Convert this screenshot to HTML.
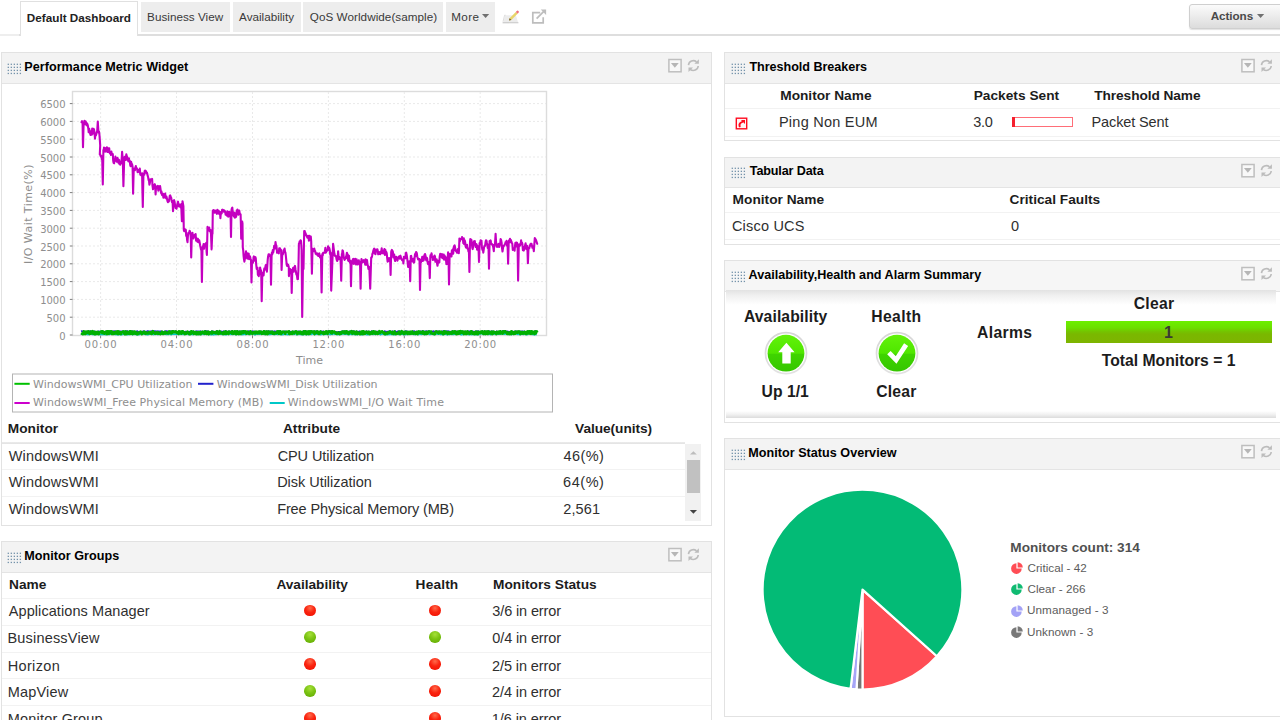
<!DOCTYPE html>
<html>
<head>
<meta charset="utf-8">
<title>Default Dashboard</title>
<style>
html,body{margin:0;padding:0;}
body{width:1280px;height:720px;overflow:hidden;background:#fff;font-family:"Liberation Sans",Arial,sans-serif;color:#222;position:relative;}
.abs{position:absolute;}
.t{position:absolute;white-space:nowrap;line-height:1;}
/* tabs */
#tabline{left:0;top:34px;width:1280px;height:1.5px;background:linear-gradient(90deg,#eeeeee 0,#eeeeee 19px,#dedede 19px);}
.tab{position:absolute;top:2px;height:30px;background:#ededed;}
#tabact{position:absolute;left:19.5px;top:1px;width:118px;height:35px;background:#fff;border:1px solid #e0e0e0;border-bottom:none;box-sizing:border-box;}
#actions{position:absolute;left:1189px;top:3.5px;width:100px;height:25px;box-sizing:border-box;border:1px solid #cfcfcf;border-radius:3px;background:linear-gradient(#fbfbfb,#dcdcdc);box-shadow:0 1px 1px rgba(0,0,0,.12);}
.caret{position:absolute;width:0;height:0;border-left:3.6px solid transparent;border-right:3.6px solid transparent;border-top:4px solid #777;}
/* widgets */
.w{position:absolute;border:1px solid #e2e2e2;background:#fff;box-sizing:border-box;}
.wh{position:absolute;left:0;top:0;right:0;height:29.5px;background:#f3f3f3;border-bottom:1px solid #e4e4e4;}
.grip{position:absolute;left:5.35px;top:9.5px;width:15px;height:12px;overflow:visible;}
.hic{position:absolute;top:4px;width:34px;height:18px;overflow:visible;}
.hl{position:absolute;height:1px;background:#f2f2f2;}
.dot{position:absolute;width:11.6px;height:11.6px;border-radius:50%;}
.dr{background:radial-gradient(circle at 50% 28%,#ff6a4a 0%,#fa2410 45%,#ee0f00 100%);}
.dg{background:radial-gradient(circle at 50% 28%,#a6e03a 0%,#7cc414 45%,#5fa800 100%);}
</style>
</head>
<body>

<!-- shared icon symbols -->
<svg width="0" height="0" style="position:absolute">
  <defs>
    <symbol id="grip" viewBox="0 0 15 12" overflow="visible">
      <g fill="#fff"><!--halo-->
        <path d="M0.9 1.1h14v11h-14z" opacity="0"/>
      </g>
      <g fill="#7392aa">
        <rect x="0.65" y="0.65" width="1.3" height="1.3"/><rect x="3.67" y="0.65" width="1.3" height="1.3"/><rect x="6.69" y="0.65" width="1.3" height="1.3"/><rect x="9.71" y="0.65" width="1.3" height="1.3"/><rect x="12.73" y="0.65" width="1.3" height="1.3"/><rect x="0.65" y="3.70" width="1.3" height="1.3"/><rect x="3.67" y="3.70" width="1.3" height="1.3"/><rect x="6.69" y="3.70" width="1.3" height="1.3"/><rect x="9.71" y="3.70" width="1.3" height="1.3"/><rect x="12.73" y="3.70" width="1.3" height="1.3"/><rect x="0.65" y="6.75" width="1.3" height="1.3"/><rect x="3.67" y="6.75" width="1.3" height="1.3"/><rect x="6.69" y="6.75" width="1.3" height="1.3"/><rect x="9.71" y="6.75" width="1.3" height="1.3"/><rect x="12.73" y="6.75" width="1.3" height="1.3"/><rect x="0.65" y="9.80" width="1.3" height="1.3"/><rect x="3.67" y="9.80" width="1.3" height="1.3"/><rect x="6.69" y="9.80" width="1.3" height="1.3"/><rect x="9.71" y="9.80" width="1.3" height="1.3"/><rect x="12.73" y="9.80" width="1.3" height="1.3"/>
      </g>
    </symbol>
    <symbol id="hicons" viewBox="0 0 34 18" overflow="visible">
      <rect x="1.9" y="2.5" width="12.2" height="12.3" fill="#f8f8f8" stroke="#bebebe" stroke-width="1.5"/>
      <path d="M3.95 6.05h7.8l-3.9 4.75z" fill="#b6b6b6"/>
      <g fill="none" stroke="#bcbcbc" stroke-width="1.6">
        <path d="M21.47 8.12A4.9 4.9 0 0 1 29.5 4.8"/>
        <path d="M31.23 8.98A4.9 4.9 0 0 1 23.2 12.3"/>
      </g>
      <path d="M31.9 2.2v4.5h-4.5z" fill="#bcbcbc"/>
      <path d="M21.5 15v-4.5h4.5z" fill="#bcbcbc"/>
    </symbol>
    <symbol id="pieic" viewBox="0 0 12 12" overflow="visible">
      <path d="M5.4 1.3A5.3 5.3 0 1 0 10.7 6.6H5.4z"/>
      <path d="M6.6 0.2a5.2 5.2 0 0 1 5.2 5.2H6.6z"/>
    </symbol>
  </defs>
</svg>

<!-- TAB BAR -->
<div class="abs" id="tabline"></div>
<div id="tabact"></div>
<div class="tab" style="left:141px;width:89.3px;"></div>
<div class="tab" style="left:232.6px;width:68.4px;"></div>
<div class="tab" style="left:303.4px;width:139.6px;"></div>
<div class="tab" style="left:446px;width:49px;"></div>
<svg class="abs" style="left:482px;top:14px" width="8" height="5" viewBox="0 0 8 5"><path d="M0 0h7.2l-3.6 4.1z" fill="#707070"/></svg>
<!-- edit icon -->
<svg class="abs" style="left:501px;top:9px;overflow:visible" width="19" height="16" viewBox="0 0 19 16">
  <path d="M4.3 6.2h10.6l2.2 7.2h-15z" fill="#ececec"/>
  <path d="M1.6 13.2h15.8v1.1h-15.8z" fill="#c4c4c4"/>
  <path d="M2 12.6l1.6-6.4h1" fill="none" stroke="#d6d6d6" stroke-width=".8"/>
  <path d="M8 11.6l.6-2.4 6.2-6.3 1.8 1.8-6.3 6.2z" fill="#e8d46a"/>
  <path d="M8 11.6l.6-2.4 1.8 1.7z" fill="#6b5a3a"/>
  <path d="M14.8 2.9l.9-.9a1.2 1.2 0 0 1 1.8 1.8l-.9.9z" fill="#f0707c"/>
</svg>
<!-- popout icon -->
<svg class="abs" style="left:530px;top:8px;overflow:visible" width="18" height="17" viewBox="0 0 18 17">
  <path d="M10.2 4.6H2.8v10.2h10.4V9.2" fill="none" stroke="#bdbdbd" stroke-width="1.7"/>
  <path d="M6.6 10.6l8.2-8.2" fill="none" stroke="#bdbdbd" stroke-width="1.8"/>
  <path d="M10.8 1.6h5.3v5.3z" fill="#bdbdbd"/>
</svg>
<div id="actions"></div>
<svg class="abs" style="left:1257px;top:14px" width="8" height="5" viewBox="0 0 8 5"><path d="M0 0h7.2l-3.6 4.1z" fill="#707070"/></svg>
<span class="t" style="left:26.85px;top:12px;font-size:11.7px;letter-spacing:0.013px;font-weight:bold;color:#222;">Default Dashboard</span>
<span class="t" style="left:147.10px;top:11px;font-size:11.7px;letter-spacing:0.021px;color:#3a3a3a;">Business View</span>
<span class="t" style="left:239.10px;top:11px;font-size:11.7px;letter-spacing:-0.009px;color:#3a3a3a;">Availability</span>
<span class="t" style="left:309.80px;top:11px;font-size:11.7px;letter-spacing:0.047px;color:#3a3a3a;">QoS Worldwide(sample)</span>
<span class="t" style="left:451.20px;top:11px;font-size:11.7px;letter-spacing:0.383px;color:#3a3a3a;">More</span>
<span class="t" style="left:1210.75px;top:10px;font-size:11.7px;letter-spacing:-0.075px;font-weight:bold;color:#4a4a4a;">Actions</span>

<!-- WIDGET 1 : Performance Metric Widget -->
<div class="w" id="w1" style="left:1px;top:52px;width:711px;height:474px;">
  <div class="wh"><svg class="grip"><use href="#grip"/></svg><svg class="hic" style="left:665px"><use href="#hicons"/></svg></div>
</div>
<svg class="abs" id="chart" style="left:0;top:0;overflow:visible" width="720" height="430" viewBox="0 0 720 430" font-family="'DejaVu Sans',Verdana,sans-serif" fill="#8e8e8e">
<rect x="72.5" y="91.5" width="474" height="244" fill="#fff" stroke="#dcdcdc" stroke-width="1.4"/>
<path d="M73 317.2H546M73 299.4H546M73 281.6H546M73 263.8H546M73 246.0H546M73 228.2H546M73 210.4H546M73 192.6H546M73 174.8H546M73 157.0H546M73 139.2H546M73 121.4H546M73 103.6H546M100.6 92V335M176.5 92V335M252.5 92V335M328.4 92V335M404.3 92V335M480.2 92V335" stroke="#e9e9e9" stroke-width="1" stroke-dasharray="2 2" fill="none"/>
<path d="M69.8 335.0H72.5M69.8 317.2H72.5M69.8 299.4H72.5M69.8 281.6H72.5M69.8 263.8H72.5M69.8 246.0H72.5M69.8 228.2H72.5M69.8 210.4H72.5M69.8 192.6H72.5M69.8 174.8H72.5M69.8 157.0H72.5M69.8 139.2H72.5M69.8 121.4H72.5M69.8 103.6H72.5M100.6 335.5V338.3M176.5 335.5V338.3M252.5 335.5V338.3M328.4 335.5V338.3M404.3 335.5V338.3M480.2 335.5V338.3" stroke="#7d7d7d" stroke-width="1" fill="none"/>
<g font-size="10" text-anchor="end">
<text x="65.6" y="339.6">0</text>
<text x="65.6" y="321.8">500</text>
<text x="65.6" y="304.0">1000</text>
<text x="65.6" y="286.2">1500</text>
<text x="65.6" y="268.4">2000</text>
<text x="65.6" y="250.6">2500</text>
<text x="65.6" y="232.8">3000</text>
<text x="65.6" y="215.0">3500</text>
<text x="65.6" y="197.2">4000</text>
<text x="65.6" y="179.4">4500</text>
<text x="65.6" y="161.6">5000</text>
<text x="65.6" y="143.8">5500</text>
<text x="65.6" y="126.0">6000</text>
<text x="65.6" y="108.2">6500</text>
</g>
<g font-size="10" text-anchor="middle">
<text x="100.6" y="348.4" textLength="32" lengthAdjust="spacing">00:00</text>
<text x="176.5" y="348.4" textLength="32" lengthAdjust="spacing">04:00</text>
<text x="252.5" y="348.4" textLength="32" lengthAdjust="spacing">08:00</text>
<text x="328.4" y="348.4" textLength="32" lengthAdjust="spacing">12:00</text>
<text x="404.3" y="348.4" textLength="32" lengthAdjust="spacing">16:00</text>
<text x="480.2" y="348.4" textLength="32" lengthAdjust="spacing">20:00</text>
</g>
<text x="309.5" y="364" font-size="11" text-anchor="middle">Time</text>
<text transform="translate(31.8 214.3) rotate(-90)" font-size="11" text-anchor="middle" textLength="99.5" lengthAdjust="spacing">I/O Wait Time(%)</text>
<path d="M81.0 333.9 L81.7 334.2 L82.4 334.1 L83.1 334.3 L83.8 334.3 L84.5 333.8 L85.2 333.7 L85.9 334.5 L86.6 334.0 L87.3 333.9 L88.0 334.7 L88.7 334.2 L89.4 334.5 L90.1 334.2 L90.8 334.3 L91.5 333.9 L92.2 334.3 L92.9 334.6 L93.6 334.2 L94.3 334.4 L95.0 334.4 L95.7 333.8 L96.4 334.5 L97.1 334.3 L97.8 334.0 L98.5 333.7 L99.2 334.6 L99.9 334.2 L100.6 334.4 L101.3 334.6 L102.0 334.4 L102.7 334.6 L103.4 334.1 L104.1 334.5 L104.8 334.1 L105.5 334.6 L106.2 334.6 L106.9 333.8 L107.6 333.8 L108.3 333.9 L109.0 334.7 L109.7 334.1 L110.4 334.3 L111.1 334.0 L111.8 334.2 L112.5 334.1 L113.2 334.1 L113.9 334.3 L114.6 334.3 L115.3 334.6 L116.0 334.4 L116.7 334.6 L117.4 334.6 L118.1 334.7 L118.8 334.4 L119.5 333.9 L120.2 334.6 L120.9 334.7 L121.6 334.6 L122.3 334.3 L123.0 334.4 L123.7 333.9 L124.4 334.5 L125.1 334.3 L125.8 334.0 L126.5 333.8 L127.2 334.6 L127.9 334.7 L128.6 333.8 L129.3 334.5 L130.0 334.1 L130.7 333.9 L131.4 334.0 L132.1 334.5 L132.8 334.6 L133.5 333.7 L134.2 334.3 L134.9 333.7 L135.6 334.4 L136.3 334.0 L137.0 334.6 L137.7 334.7 L138.4 334.2 L139.1 334.7 L139.8 334.0 L140.5 333.8 L141.2 334.3 L141.9 333.7 L142.6 333.9 L143.3 334.1 L144.0 334.3 L144.7 333.9 L145.4 333.7 L146.1 334.6 L146.8 334.0 L147.5 334.7 L148.2 334.6 L148.9 334.1 L149.6 334.2 L150.3 334.2 L151.0 334.3 L151.7 334.3 L152.4 334.3 L153.1 334.3 L153.8 334.6 L154.5 334.2 L155.2 334.1 L155.9 334.4 L156.6 333.9 L157.3 334.0 L158.0 334.7 L158.7 334.2 L159.4 334.2 L160.1 333.7 L160.8 334.1 L161.5 334.3 L162.2 333.7 L162.9 334.3 L163.6 334.3 L164.3 333.8 L165.0 334.3 L165.7 334.2 L166.4 334.4 L167.1 334.1 L167.8 334.4 L168.5 334.4 L169.2 333.7 L169.9 333.8 L170.6 334.4 L171.3 334.7 L172.0 334.0 L172.7 334.2 L173.4 334.3 L174.1 334.0 L174.8 334.1 L175.5 334.0 L176.2 334.1 L176.9 334.3 L177.6 334.0 L178.3 334.1 L179.0 334.5 L179.7 333.7 L180.4 334.3 L181.1 334.4 L181.8 334.0 L182.5 333.9 L183.2 334.5 L183.9 333.9 L184.6 333.9 L185.3 334.1 L186.0 334.4 L186.7 333.8 L187.4 334.0 L188.1 334.0 L188.8 334.5 L189.5 334.1 L190.2 334.6 L190.9 333.9 L191.6 334.0 L192.3 334.4 L193.0 334.6 L193.7 334.2 L194.4 333.9 L195.1 333.8 L195.8 334.2 L196.5 333.9 L197.2 334.5 L197.9 334.5 L198.6 333.9 L199.3 334.0 L200.0 334.5 L200.7 334.3 L201.4 334.5 L202.1 334.0 L202.8 333.8 L203.5 334.0 L204.2 334.5 L204.9 334.0 L205.6 334.0 L206.3 334.1 L207.0 334.1 L207.7 334.1 L208.4 334.6 L209.1 333.9 L209.8 333.7 L210.5 334.6 L211.2 334.6 L211.9 334.7 L212.6 334.1 L213.3 334.7 L214.0 334.6 L214.7 333.9 L215.4 334.4 L216.1 334.5 L216.8 334.4 L217.5 334.2 L218.2 334.0 L218.9 334.0 L219.6 333.9 L220.3 333.8 L221.0 334.3 L221.7 334.0 L222.4 334.5 L223.1 333.7 L223.8 334.6 L224.5 334.4 L225.2 334.6 L225.9 334.6 L226.6 334.6 L227.3 334.3 L228.0 333.7 L228.7 334.4 L229.4 333.9 L230.1 334.0 L230.8 334.4 L231.5 334.2 L232.2 334.1 L232.9 334.6 L233.6 334.3 L234.3 334.0 L235.0 334.0 L235.7 334.6 L236.4 334.2 L237.1 334.5 L237.8 334.1 L238.5 333.9 L239.2 334.2 L239.9 334.5 L240.6 333.9 L241.3 334.5 L242.0 334.6 L242.7 334.5 L243.4 334.5 L244.1 333.7 L244.8 334.3 L245.5 334.6 L246.2 333.7 L246.9 334.0 L247.6 334.0 L248.3 334.2 L249.0 334.1 L249.7 334.2 L250.4 334.5 L251.1 333.7 L251.8 333.8 L252.5 333.8 L253.2 333.8 L253.9 333.8 L254.6 334.7 L255.3 334.6 L256.0 333.8 L256.7 334.2 L257.4 334.0 L258.1 334.0 L258.8 334.1 L259.5 334.3 L260.2 334.3 L260.9 334.1 L261.6 333.9 L262.3 334.0 L263.0 333.8 L263.7 334.3 L264.4 334.4 L265.1 334.1 L265.8 333.8 L266.5 333.9 L267.2 334.1 L267.9 334.3 L268.6 334.5 L269.3 334.1 L270.0 334.5 L270.7 334.3 L271.4 334.1 L272.1 334.1 L272.8 334.2 L273.5 334.4 L274.2 334.1 L274.9 334.4 L275.6 334.2 L276.3 333.9 L277.0 334.2 L277.7 334.4 L278.4 333.8 L279.1 334.1 L279.8 334.1 L280.5 334.6 L281.2 334.6 L281.9 334.1 L282.6 334.6 L283.3 334.5 L284.0 334.0 L284.7 334.2 L285.4 333.8 L286.1 334.5 L286.8 334.4 L287.5 334.6 L288.2 334.5 L288.9 334.4 L289.6 334.4 L290.3 334.3 L291.0 333.8 L291.7 334.3 L292.4 333.7 L293.1 333.8 L293.8 334.5 L294.5 333.7 L295.2 333.8 L295.9 333.8 L296.6 334.6 L297.3 333.9 L298.0 333.7 L298.7 334.5 L299.4 333.8 L300.1 334.5 L300.8 334.4 L301.5 334.5 L302.2 334.7 L302.9 334.3 L303.6 334.5 L304.3 333.7 L305.0 334.5 L305.7 334.2 L306.4 334.4 L307.1 333.8 L307.8 334.4 L308.5 334.6 L309.2 333.8 L309.9 334.0 L310.6 334.3 L311.3 334.5 L312.0 333.9 L312.7 333.9 L313.4 333.9 L314.1 334.3 L314.8 334.5 L315.5 334.1 L316.2 334.1 L316.9 334.1 L317.6 334.1 L318.3 334.1 L319.0 333.8 L319.7 334.2 L320.4 334.7 L321.1 334.1 L321.8 334.4 L322.5 333.9 L323.2 334.4 L323.9 334.5 L324.6 334.4 L325.3 334.2 L326.0 334.2 L326.7 334.3 L327.4 334.6 L328.1 333.8 L328.8 333.8 L329.5 334.4 L330.2 334.6 L330.9 334.2 L331.6 334.1 L332.3 334.4 L333.0 333.9 L333.7 334.0 L334.4 333.9 L335.1 334.3 L335.8 334.0 L336.5 333.9 L337.2 334.4 L337.9 334.7 L338.6 334.0 L339.3 334.4 L340.0 334.1 L340.7 334.6 L341.4 334.3 L342.1 334.0 L342.8 333.9 L343.5 333.7 L344.2 334.2 L344.9 334.1 L345.6 333.9 L346.3 334.1 L347.0 334.0 L347.7 334.5 L348.4 333.8 L349.1 334.7 L349.8 334.2 L350.5 334.3 L351.2 334.2 L351.9 334.5 L352.6 334.5 L353.3 334.3 L354.0 334.2 L354.7 334.4 L355.4 334.6 L356.1 334.1 L356.8 334.4 L357.5 334.7 L358.2 334.2 L358.9 333.9 L359.6 333.9 L360.3 334.4 L361.0 334.4 L361.7 334.7 L362.4 334.6 L363.1 333.9 L363.8 333.9 L364.5 334.0 L365.2 333.9 L365.9 334.4 L366.6 334.6 L367.3 334.6 L368.0 334.0 L368.7 334.6 L369.4 334.0 L370.1 334.1 L370.8 334.4 L371.5 333.8 L372.2 333.8 L372.9 334.5 L373.6 334.0 L374.3 334.1 L375.0 334.3 L375.7 334.4 L376.4 333.7 L377.1 334.0 L377.8 334.1 L378.5 334.2 L379.2 333.9 L379.9 334.3 L380.6 334.7 L381.3 334.1 L382.0 334.2 L382.7 333.8 L383.4 334.0 L384.1 334.4 L384.8 333.8 L385.5 334.6 L386.2 334.6 L386.9 333.8 L387.6 334.6 L388.3 334.1 L389.0 334.5 L389.7 334.5 L390.4 334.0 L391.1 334.4 L391.8 334.4 L392.5 334.5 L393.2 334.0 L393.9 334.5 L394.6 334.7 L395.3 334.4 L396.0 334.2 L396.7 333.8 L397.4 334.2 L398.1 334.1 L398.8 334.4 L399.5 334.4 L400.2 334.3 L400.9 333.9 L401.6 334.3 L402.3 334.3 L403.0 333.9 L403.7 334.6 L404.4 334.4 L405.1 333.8 L405.8 334.6 L406.5 333.8 L407.2 334.0 L407.9 334.4 L408.6 334.3 L409.3 334.3 L410.0 334.3 L410.7 334.2 L411.4 334.0 L412.1 333.9 L412.8 333.8 L413.5 334.4 L414.2 334.5 L414.9 334.2 L415.6 334.4 L416.3 334.1 L417.0 334.0 L417.7 334.1 L418.4 334.6 L419.1 333.7 L419.8 334.2 L420.5 333.9 L421.2 334.5 L421.9 334.1 L422.6 334.0 L423.3 334.1 L424.0 334.2 L424.7 334.5 L425.4 334.1 L426.1 334.5 L426.8 333.8 L427.5 334.0 L428.2 333.8 L428.9 333.8 L429.6 334.5 L430.3 334.4 L431.0 333.9 L431.7 333.9 L432.4 334.1 L433.1 334.4 L433.8 334.5 L434.5 334.4 L435.2 334.3 L435.9 333.8 L436.6 334.1 L437.3 333.9 L438.0 334.2 L438.7 334.3 L439.4 333.9 L440.1 334.0 L440.8 334.5 L441.5 333.7 L442.2 334.5 L442.9 334.6 L443.6 334.6 L444.3 334.1 L445.0 334.3 L445.7 334.3 L446.4 334.3 L447.1 334.7 L447.8 334.4 L448.5 334.0 L449.2 334.6 L449.9 334.2 L450.6 334.3 L451.3 334.4 L452.0 333.7 L452.7 334.5 L453.4 334.4 L454.1 334.2 L454.8 334.2 L455.5 334.2 L456.2 333.9 L456.9 334.2 L457.6 333.7 L458.3 334.2 L459.0 334.3 L459.7 334.1 L460.4 334.3 L461.1 334.7 L461.8 334.6 L462.5 333.8 L463.2 334.5 L463.9 334.3 L464.6 333.8 L465.3 334.1 L466.0 333.9 L466.7 333.8 L467.4 334.2 L468.1 334.6 L468.8 334.0 L469.5 334.6 L470.2 334.4 L470.9 333.8 L471.6 334.6 L472.3 334.3 L473.0 334.6 L473.7 334.4 L474.4 334.4 L475.1 334.0 L475.8 334.5 L476.5 334.6 L477.2 334.6 L477.9 334.1 L478.6 334.5 L479.3 334.2 L480.0 333.8 L480.7 333.7 L481.4 333.8 L482.1 333.9 L482.8 333.9 L483.5 334.2 L484.2 334.4 L484.9 334.2 L485.6 334.1 L486.3 334.3 L487.0 334.0 L487.7 334.2 L488.4 334.5 L489.1 334.1 L489.8 333.9 L490.5 334.6 L491.2 334.4 L491.9 334.1 L492.6 334.1 L493.3 334.2 L494.0 334.3 L494.7 333.9 L495.4 333.7 L496.1 333.9 L496.8 334.5 L497.5 333.8 L498.2 334.2 L498.9 333.9 L499.6 333.9 L500.3 333.9 L501.0 334.1 L501.7 333.9 L502.4 333.7 L503.1 333.8 L503.8 333.9 L504.5 334.2 L505.2 333.8 L505.9 333.7 L506.6 334.1 L507.3 334.1 L508.0 334.4 L508.7 333.8 L509.4 334.1 L510.1 334.1 L510.8 333.7 L511.5 334.7 L512.2 333.9 L512.9 333.8 L513.6 334.2 L514.3 333.9 L515.0 334.3 L515.7 334.0 L516.4 333.8 L517.1 333.8 L517.8 334.4 L518.5 334.0 L519.2 334.5 L519.9 334.2 L520.6 334.6 L521.3 334.0 L522.0 333.9 L522.7 334.0 L523.4 334.5 L524.1 334.3 L524.8 334.0 L525.5 333.8 L526.2 334.4 L526.9 334.7 L527.6 334.3 L528.3 333.7 L529.0 333.7 L529.7 333.8 L530.4 333.9 L531.1 333.7 L531.8 333.8 L532.5 334.4 L533.2 334.6 L533.9 333.9 L534.6 334.7 L535.3 334.2 L536.0 334.5 L536.7 334.6" stroke="#00c8c8" stroke-width="1.6" fill="none" stroke-linejoin="round"/>
<path d="M81.0 331.3 L81.7 331.1 L82.4 331.5 L83.1 331.2 L83.8 331.1 L84.5 331.5 L85.2 332.1 L85.9 332.0 L86.6 331.9 L87.3 331.3 L88.0 331.6 L88.7 331.3 L89.4 331.2 L90.1 331.1 L90.8 331.3 L91.5 332.1 L92.2 332.0 L92.9 332.0 L93.6 332.0 L94.3 331.2 L95.0 331.4 L95.7 331.8 L96.4 331.9 L97.1 332.0 L97.8 332.1 L98.5 331.1 L99.2 331.7 L99.9 331.8 L100.6 331.6 L101.3 331.2 L102.0 331.6 L102.7 331.1 L103.4 332.1 L104.1 332.0 L104.8 331.7 L105.5 331.4 L106.2 332.1 L106.9 331.7 L107.6 332.1 L108.3 332.0 L109.0 331.6 L109.7 331.5 L110.4 331.7 L111.1 331.5 L111.8 331.2 L112.5 331.4 L113.2 332.0 L113.9 331.1 L114.6 331.1 L115.3 331.8 L116.0 331.3 L116.7 331.6 L117.4 331.6 L118.1 331.4 L118.8 332.2 L119.5 331.2 L120.2 331.5 L120.9 331.2 L121.6 331.8 L122.3 331.3 L123.0 331.4 L123.7 331.9 L124.4 331.4 L125.1 331.7 L125.8 332.1 L126.5 331.1 L127.2 331.1 L127.9 331.3 L128.6 331.9 L129.3 331.7 L130.0 331.3 L130.7 331.4 L131.4 331.2 L132.1 331.6 L132.8 331.1 L133.5 331.8 L134.2 332.1 L134.9 332.1 L135.6 331.9 L136.3 332.2 L137.0 331.0 L137.7 331.3 L138.4 332.2 L139.1 331.9 L139.8 331.5 L140.5 332.1 L141.2 331.7 L141.9 332.0 L142.6 331.4 L143.3 331.2 L144.0 331.5 L144.7 331.2 L145.4 331.5 L146.1 332.2 L146.8 331.4 L147.5 331.0 L148.2 331.1 L148.9 331.2 L149.6 331.9 L150.3 331.4 L151.0 331.3 L151.7 331.1 L152.4 332.2 L153.1 331.5 L153.8 331.2 L154.5 331.1 L155.2 331.1 L155.9 331.2 L156.6 331.8 L157.3 331.2 L158.0 331.0 L158.7 331.6 L159.4 331.3 L160.1 332.2 L160.8 331.1 L161.5 331.6 L162.2 331.9 L162.9 331.5 L163.6 332.2 L164.3 331.6 L165.0 331.3 L165.7 331.5 L166.4 331.0 L167.1 331.5 L167.8 331.3 L168.5 332.1 L169.2 332.0 L169.9 331.6 L170.6 331.0 L171.3 331.3 L172.0 331.3 L172.7 331.2 L173.4 331.3 L174.1 332.0 L174.8 331.2 L175.5 331.1 L176.2 332.1 L176.9 331.7 L177.6 332.2 L178.3 331.5 L179.0 332.1 L179.7 331.8 L180.4 331.9 L181.1 331.9 L181.8 331.6 L182.5 331.1 L183.2 331.3 L183.9 332.0 L184.6 332.1 L185.3 332.1 L186.0 331.4 L186.7 331.8 L187.4 332.0 L188.1 331.8 L188.8 332.0 L189.5 331.6 L190.2 331.8 L190.9 331.8 L191.6 331.3 L192.3 332.1 L193.0 332.1 L193.7 331.1 L194.4 332.2 L195.1 332.2 L195.8 331.8 L196.5 331.1 L197.2 332.1 L197.9 331.2 L198.6 332.2 L199.3 331.8 L200.0 331.1 L200.7 331.2 L201.4 331.8 L202.1 331.7 L202.8 331.9 L203.5 332.1 L204.2 331.3 L204.9 331.0 L205.6 332.1 L206.3 331.0 L207.0 332.1 L207.7 331.1 L208.4 332.0 L209.1 331.9 L209.8 332.1 L210.5 331.7 L211.2 332.1 L211.9 331.2 L212.6 331.8 L213.3 331.4 L214.0 332.1 L214.7 331.9 L215.4 331.6 L216.1 331.6 L216.8 331.0 L217.5 331.0 L218.2 331.7 L218.9 331.6 L219.6 332.0 L220.3 331.7 L221.0 331.2 L221.7 331.4 L222.4 331.9 L223.1 331.6 L223.8 331.0 L224.5 332.0 L225.2 332.0 L225.9 331.1 L226.6 331.7 L227.3 331.5 L228.0 331.9 L228.7 331.4 L229.4 331.3 L230.1 331.6 L230.8 332.2 L231.5 331.1 L232.2 331.1 L232.9 331.7 L233.6 332.1 L234.3 331.6 L235.0 331.5 L235.7 332.0 L236.4 331.9 L237.1 331.1 L237.8 332.1 L238.5 331.2 L239.2 331.4 L239.9 332.0 L240.6 331.5 L241.3 332.0 L242.0 331.2 L242.7 332.0 L243.4 331.2 L244.1 331.2 L244.8 331.6 L245.5 331.4 L246.2 331.7 L246.9 332.1 L247.6 331.9 L248.3 331.0 L249.0 331.4 L249.7 331.7 L250.4 331.6 L251.1 331.9 L251.8 331.6 L252.5 331.1 L253.2 331.3 L253.9 332.0 L254.6 331.4 L255.3 331.9 L256.0 332.2 L256.7 331.8 L257.4 331.8 L258.1 331.7 L258.8 331.4 L259.5 332.1 L260.2 331.6 L260.9 332.1 L261.6 331.4 L262.3 332.0 L263.0 331.9 L263.7 331.7 L264.4 331.5 L265.1 331.2 L265.8 331.9 L266.5 331.4 L267.2 331.8 L267.9 331.2 L268.6 331.1 L269.3 331.2 L270.0 332.0 L270.7 331.2 L271.4 332.1 L272.1 331.4 L272.8 331.7 L273.5 331.4 L274.2 331.7 L274.9 331.1 L275.6 331.5 L276.3 332.1 L277.0 331.2 L277.7 331.8 L278.4 331.4 L279.1 331.4 L279.8 331.0 L280.5 331.0 L281.2 332.1 L281.9 332.0 L282.6 332.0 L283.3 332.0 L284.0 332.1 L284.7 331.2 L285.4 331.7 L286.1 331.6 L286.8 331.7 L287.5 332.1 L288.2 331.9 L288.9 332.2 L289.6 331.1 L290.3 331.8 L291.0 331.8 L291.7 331.9 L292.4 331.7 L293.1 332.0 L293.8 331.4 L294.5 332.1 L295.2 331.5 L295.9 331.7 L296.6 332.1 L297.3 331.8 L298.0 331.4 L298.7 331.3 L299.4 331.4 L300.1 331.8 L300.8 332.2 L301.5 332.1 L302.2 331.5 L302.9 331.5 L303.6 332.0 L304.3 331.3 L305.0 331.5 L305.7 331.0 L306.4 331.2 L307.1 331.6 L307.8 331.8 L308.5 331.7 L309.2 331.4 L309.9 332.1 L310.6 331.7 L311.3 331.2 L312.0 331.1 L312.7 332.2 L313.4 332.2 L314.1 332.1 L314.8 331.7 L315.5 331.4 L316.2 331.1 L316.9 331.3 L317.6 331.3 L318.3 332.1 L319.0 332.1 L319.7 331.9 L320.4 331.2 L321.1 331.3 L321.8 331.4 L322.5 332.1 L323.2 331.2 L323.9 331.9 L324.6 331.8 L325.3 331.7 L326.0 332.2 L326.7 331.3 L327.4 331.6 L328.1 331.2 L328.8 331.1 L329.5 331.0 L330.2 331.4 L330.9 331.1 L331.6 331.1 L332.3 332.2 L333.0 331.3 L333.7 332.1 L334.4 331.8 L335.1 331.9 L335.8 331.8 L336.5 332.1 L337.2 332.1 L337.9 331.9 L338.6 331.7 L339.3 331.8 L340.0 331.9 L340.7 331.7 L341.4 331.6 L342.1 331.2 L342.8 332.0 L343.5 331.6 L344.2 331.1 L344.9 331.2 L345.6 332.0 L346.3 331.3 L347.0 331.5 L347.7 331.8 L348.4 332.0 L349.1 331.4 L349.8 331.5 L350.5 331.5 L351.2 331.0 L351.9 332.1 L352.6 331.0 L353.3 332.2 L354.0 331.2 L354.7 331.2 L355.4 332.0 L356.1 332.0 L356.8 331.3 L357.5 331.7 L358.2 331.6 L358.9 331.9 L359.6 331.2 L360.3 332.0 L361.0 332.2 L361.7 331.8 L362.4 332.1 L363.1 332.1 L363.8 331.5 L364.5 332.0 L365.2 332.0 L365.9 331.7 L366.6 331.1 L367.3 331.7 L368.0 332.1 L368.7 331.4 L369.4 331.8 L370.1 332.1 L370.8 331.7 L371.5 331.0 L372.2 331.8 L372.9 331.3 L373.6 332.0 L374.3 331.8 L375.0 331.4 L375.7 332.1 L376.4 331.8 L377.1 331.4 L377.8 332.0 L378.5 332.1 L379.2 332.1 L379.9 332.1 L380.6 331.8 L381.3 331.8 L382.0 331.7 L382.7 331.6 L383.4 332.2 L384.1 331.4 L384.8 331.1 L385.5 331.9 L386.2 331.6 L386.9 331.7 L387.6 331.7 L388.3 331.3 L389.0 331.2 L389.7 331.1 L390.4 331.9 L391.1 332.1 L391.8 331.8 L392.5 331.1 L393.2 332.2 L393.9 332.0 L394.6 331.6 L395.3 331.0 L396.0 332.0 L396.7 331.7 L397.4 331.7 L398.1 331.0 L398.8 331.9 L399.5 331.0 L400.2 331.6 L400.9 331.2 L401.6 331.4 L402.3 332.1 L403.0 331.9 L403.7 332.0 L404.4 331.4 L405.1 331.5 L405.8 331.7 L406.5 331.0 L407.2 331.5 L407.9 332.2 L408.6 331.9 L409.3 332.0 L410.0 331.4 L410.7 331.8 L411.4 331.9 L412.1 331.8 L412.8 331.5 L413.5 331.2 L414.2 331.0 L414.9 332.1 L415.6 332.1 L416.3 331.3 L417.0 331.9 L417.7 331.5 L418.4 331.8 L419.1 332.0 L419.8 331.4 L420.5 331.7 L421.2 331.3 L421.9 331.6 L422.6 331.0 L423.3 331.3 L424.0 331.3 L424.7 332.1 L425.4 331.2 L426.1 331.9 L426.8 331.1 L427.5 332.2 L428.2 331.2 L428.9 331.1 L429.6 331.3 L430.3 332.1 L431.0 331.8 L431.7 332.1 L432.4 331.6 L433.1 331.1 L433.8 331.4 L434.5 331.5 L435.2 332.2 L435.9 331.2 L436.6 331.3 L437.3 332.0 L438.0 331.1 L438.7 332.2 L439.4 331.4 L440.1 331.7 L440.8 331.8 L441.5 332.1 L442.2 331.1 L442.9 332.0 L443.6 331.2 L444.3 331.9 L445.0 331.0 L445.7 331.9 L446.4 331.2 L447.1 331.2 L447.8 331.0 L448.5 331.4 L449.2 331.4 L449.9 332.2 L450.6 331.7 L451.3 331.4 L452.0 332.2 L452.7 331.2 L453.4 331.3 L454.1 332.1 L454.8 332.1 L455.5 331.8 L456.2 332.2 L456.9 331.1 L457.6 332.1 L458.3 331.8 L459.0 331.8 L459.7 332.0 L460.4 331.1 L461.1 331.2 L461.8 331.2 L462.5 331.6 L463.2 331.7 L463.9 331.6 L464.6 331.4 L465.3 331.9 L466.0 332.0 L466.7 331.9 L467.4 331.0 L468.1 331.2 L468.8 331.3 L469.5 331.3 L470.2 331.7 L470.9 331.2 L471.6 331.7 L472.3 331.4 L473.0 331.4 L473.7 331.8 L474.4 332.1 L475.1 331.2 L475.8 331.4 L476.5 332.2 L477.2 331.3 L477.9 331.0 L478.6 331.2 L479.3 332.0 L480.0 331.9 L480.7 332.1 L481.4 331.6 L482.1 331.0 L482.8 331.4 L483.5 331.9 L484.2 331.5 L484.9 331.2 L485.6 331.5 L486.3 331.6 L487.0 331.4 L487.7 331.5 L488.4 331.2 L489.1 331.0 L489.8 331.9 L490.5 331.9 L491.2 331.5 L491.9 331.1 L492.6 331.4 L493.3 331.7 L494.0 332.1 L494.7 331.6 L495.4 332.2 L496.1 331.6 L496.8 331.2 L497.5 331.7 L498.2 331.7 L498.9 331.7 L499.6 331.9 L500.3 331.0 L501.0 331.5 L501.7 332.0 L502.4 331.2 L503.1 331.1 L503.8 331.2 L504.5 331.3 L505.2 331.5 L505.9 331.4 L506.6 331.8 L507.3 331.2 L508.0 331.4 L508.7 331.8 L509.4 331.7 L510.1 332.2 L510.8 332.1 L511.5 331.3 L512.2 331.4 L512.9 331.6 L513.6 331.7 L514.3 331.4 L515.0 332.0 L515.7 331.2 L516.4 331.6 L517.1 331.1 L517.8 332.1 L518.5 331.7 L519.2 332.2 L519.9 331.2 L520.6 331.9 L521.3 331.7 L522.0 331.1 L522.7 332.0 L523.4 332.0 L524.1 331.1 L524.8 332.1 L525.5 331.9 L526.2 331.7 L526.9 331.7 L527.6 331.3 L528.3 331.1 L529.0 331.6 L529.7 332.0 L530.4 331.3 L531.1 331.6 L531.8 331.3 L532.5 331.8 L533.2 332.2 L533.9 332.1 L534.6 331.3 L535.3 331.5 L536.0 331.0 L536.7 331.6" stroke="#2a2ad0" stroke-width="1.6" fill="none" stroke-linejoin="round"/>
<path d="M81.0 333.1 L81.5 333.4 L81.9 333.6 L82.4 334.0 L82.8 333.4 L83.3 334.0 L83.7 331.3 L84.2 332.6 L84.6 334.0 L85.1 333.1 L85.5 333.9 L86.0 331.5 L86.4 332.6 L86.9 331.9 L87.3 332.8 L87.8 332.9 L88.2 331.2 L88.7 331.9 L89.1 332.0 L89.6 333.9 L90.0 333.5 L90.5 331.7 L90.9 333.6 L91.4 331.6 L91.8 333.1 L92.3 331.6 L92.7 331.2 L93.2 333.8 L93.6 331.8 L94.1 331.8 L94.5 334.1 L95.0 333.8 L95.4 332.1 L95.9 334.1 L96.3 332.8 L96.8 333.2 L97.2 331.8 L97.7 334.0 L98.1 333.3 L98.6 334.1 L99.0 333.9 L99.5 332.1 L99.9 332.3 L100.4 331.7 L100.8 331.6 L101.3 331.4 L101.7 332.1 L102.2 333.0 L102.6 331.2 L103.1 333.2 L103.5 332.2 L104.0 332.1 L104.4 333.7 L104.9 332.6 L105.3 332.1 L105.8 332.6 L106.2 333.3 L106.7 331.4 L107.1 334.1 L107.6 331.3 L108.0 333.4 L108.5 333.7 L108.9 331.3 L109.4 333.6 L109.8 332.3 L110.3 332.9 L110.7 331.2 L111.2 331.3 L111.6 331.7 L112.1 334.1 L112.5 331.8 L113.0 333.5 L113.4 334.0 L113.9 334.0 L114.3 332.2 L114.8 332.3 L115.2 332.8 L115.7 333.5 L116.1 331.5 L116.6 333.4 L117.0 333.6 L117.5 333.8 L117.9 331.3 L118.4 334.0 L118.8 331.5 L119.3 332.2 L119.7 333.0 L120.2 334.0 L120.6 332.2 L121.1 334.0 L121.5 332.8 L122.0 332.1 L122.4 332.2 L122.9 331.7 L123.3 331.4 L123.8 331.6 L124.2 333.3 L124.7 334.2 L125.1 331.7 L125.6 331.3 L126.0 334.2 L126.5 332.8 L126.9 332.4 L127.4 331.9 L127.8 333.0 L128.3 333.7 L128.7 332.6 L129.2 332.5 L129.6 331.4 L130.1 333.9 L130.5 331.3 L131.0 332.7 L131.4 333.7 L131.9 331.6 L132.3 333.4 L132.8 334.0 L133.2 333.1 L133.7 333.6 L134.1 331.5 L134.6 332.5 L135.0 331.6 L135.5 333.7 L135.9 332.1 L136.4 332.6 L136.8 334.2 L137.3 333.8 L137.7 334.1 L138.2 332.6 L138.6 332.7 L139.1 333.4 L139.5 332.6 L139.9 332.1 L140.4 332.4 L140.8 331.6 L141.3 332.3 L141.7 334.2 L142.2 334.1 L142.6 333.1 L143.1 332.7 L143.5 332.2 L144.0 331.5 L144.4 332.0 L144.9 333.5 L145.3 333.8 L145.8 332.3 L146.2 333.6 L146.7 333.5 L147.1 333.3 L147.6 333.2 L148.0 333.5 L148.5 332.3 L148.9 333.3 L149.4 332.0 L149.8 332.7 L150.3 333.5 L150.7 333.3 L151.2 332.1 L151.6 334.0 L152.1 333.1 L152.5 332.9 L153.0 331.2 L153.4 332.8 L153.9 332.0 L154.3 333.2 L154.8 332.6 L155.2 333.7 L155.7 333.1 L156.1 333.6 L156.6 332.2 L157.0 333.1 L157.5 333.4 L157.9 333.7 L158.4 332.3 L158.8 333.7 L159.3 333.8 L159.7 333.3 L160.2 334.1 L160.6 334.1 L161.1 332.8 L161.5 332.8 L162.0 331.7 L162.4 333.7 L162.9 334.0 L163.3 332.6 L163.8 333.3 L164.2 333.4 L164.7 333.4 L165.1 331.7 L165.6 333.5 L166.0 332.9 L166.5 333.2 L166.9 332.5 L167.4 333.1 L167.8 333.5 L168.3 333.1 L168.7 333.4 L169.2 331.3 L169.6 331.7 L170.1 332.5 L170.5 333.2 L171.0 331.9 L171.4 333.3 L171.9 333.1 L172.3 331.3 L172.8 332.6 L173.2 331.9 L173.7 331.4 L174.1 331.6 L174.6 332.2 L175.0 331.7 L175.5 331.8 L175.9 331.3 L176.4 332.6 L176.8 332.3 L177.3 333.0 L177.7 333.0 L178.2 331.9 L178.6 333.9 L179.1 331.2 L179.5 332.4 L180.0 332.0 L180.4 332.4 L180.9 331.5 L181.3 333.7 L181.8 332.3 L182.2 331.3 L182.7 333.0 L183.1 331.5 L183.6 332.8 L184.0 332.2 L184.5 332.9 L184.9 334.1 L185.4 333.7 L185.8 332.5 L186.3 333.6 L186.7 333.1 L187.2 332.3 L187.6 331.6 L188.1 333.0 L188.5 332.9 L189.0 334.1 L189.4 334.1 L189.9 333.0 L190.3 332.3 L190.8 333.9 L191.2 331.2 L191.7 331.5 L192.1 332.9 L192.6 333.0 L193.0 331.6 L193.5 333.1 L193.9 333.9 L194.4 332.3 L194.8 332.5 L195.3 331.9 L195.7 332.1 L196.2 334.1 L196.6 332.3 L197.1 334.1 L197.5 333.9 L198.0 333.0 L198.4 332.0 L198.9 334.1 L199.3 332.7 L199.8 332.4 L200.2 332.2 L200.7 334.2 L201.1 332.7 L201.6 332.1 L202.0 332.6 L202.5 331.6 L202.9 333.1 L203.4 332.5 L203.8 332.1 L204.3 333.5 L204.7 333.7 L205.2 331.2 L205.6 332.8 L206.1 332.0 L206.5 334.0 L207.0 333.5 L207.4 331.9 L207.9 332.0 L208.3 331.7 L208.8 334.2 L209.2 332.1 L209.7 333.0 L210.1 332.6 L210.6 333.1 L211.0 333.0 L211.5 333.4 L211.9 331.6 L212.4 333.5 L212.8 332.1 L213.3 332.8 L213.7 332.2 L214.2 332.1 L214.6 332.8 L215.1 332.6 L215.5 332.3 L216.0 333.4 L216.4 333.0 L216.9 331.3 L217.3 332.0 L217.8 332.6 L218.2 333.9 L218.7 333.9 L219.1 332.8 L219.6 331.2 L220.0 333.5 L220.5 332.5 L220.9 332.9 L221.4 333.3 L221.8 333.1 L222.3 332.6 L222.7 333.9 L223.2 332.4 L223.6 332.4 L224.1 333.8 L224.5 331.8 L225.0 332.1 L225.4 333.7 L225.9 331.4 L226.3 333.7 L226.8 333.3 L227.2 332.5 L227.7 332.1 L228.1 333.5 L228.6 333.9 L229.0 331.6 L229.5 332.6 L229.9 332.8 L230.4 332.7 L230.8 332.2 L231.3 331.7 L231.7 333.0 L232.2 333.6 L232.6 331.4 L233.1 331.9 L233.5 333.7 L234.0 333.6 L234.4 333.2 L234.9 331.3 L235.3 333.4 L235.8 334.1 L236.2 334.2 L236.7 333.3 L237.1 331.3 L237.6 333.7 L238.0 331.9 L238.5 333.1 L238.9 334.1 L239.4 333.3 L239.8 331.6 L240.3 332.1 L240.7 334.0 L241.2 331.6 L241.6 333.0 L242.1 332.4 L242.5 331.7 L243.0 333.1 L243.4 331.3 L243.9 331.5 L244.3 332.3 L244.8 331.4 L245.2 331.4 L245.7 332.9 L246.1 333.4 L246.6 333.8 L247.0 331.6 L247.5 332.5 L247.9 332.1 L248.4 333.0 L248.8 332.7 L249.3 334.0 L249.7 332.3 L250.2 331.4 L250.6 333.3 L251.1 331.7 L251.5 333.1 L252.0 332.7 L252.4 333.9 L252.9 332.9 L253.3 333.1 L253.8 332.0 L254.2 332.9 L254.7 332.0 L255.1 333.5 L255.6 332.8 L256.0 331.6 L256.5 331.9 L256.9 332.3 L257.4 333.4 L257.8 331.7 L258.3 333.3 L258.7 333.2 L259.2 331.5 L259.6 333.2 L260.1 331.5 L260.5 331.6 L261.0 333.0 L261.4 331.9 L261.9 333.8 L262.3 332.6 L262.8 332.2 L263.2 333.6 L263.7 331.3 L264.1 333.4 L264.6 331.4 L265.0 331.7 L265.5 334.1 L265.9 333.2 L266.4 331.9 L266.8 331.5 L267.3 334.1 L267.7 333.2 L268.2 333.7 L268.6 331.6 L269.1 333.1 L269.5 332.3 L270.0 331.9 L270.4 332.2 L270.9 333.0 L271.3 332.2 L271.8 332.4 L272.2 331.6 L272.7 333.7 L273.1 333.1 L273.6 333.6 L274.0 332.5 L274.5 333.8 L274.9 332.8 L275.4 333.0 L275.8 332.9 L276.3 333.4 L276.7 332.4 L277.2 331.5 L277.6 331.3 L278.1 331.8 L278.5 331.3 L279.0 333.9 L279.4 332.6 L279.9 333.5 L280.3 331.2 L280.8 332.6 L281.2 333.9 L281.7 333.1 L282.1 332.5 L282.6 332.6 L283.0 331.5 L283.5 331.7 L283.9 331.7 L284.4 332.3 L284.8 332.4 L285.3 333.8 L285.7 331.7 L286.2 332.0 L286.6 332.0 L287.1 331.7 L287.5 332.1 L288.0 331.9 L288.4 332.6 L288.9 331.3 L289.3 334.0 L289.8 332.3 L290.2 334.0 L290.7 333.3 L291.1 333.2 L291.6 332.6 L292.0 334.0 L292.5 331.6 L292.9 333.2 L293.4 332.1 L293.8 333.2 L294.3 333.4 L294.7 331.7 L295.2 331.8 L295.6 331.3 L296.1 331.9 L296.5 331.4 L297.0 332.4 L297.4 334.1 L297.9 332.3 L298.3 332.1 L298.8 332.6 L299.2 332.0 L299.7 333.4 L300.1 333.4 L300.6 331.7 L301.0 331.9 L301.5 333.2 L301.9 334.0 L302.4 333.1 L302.8 332.5 L303.3 334.1 L303.7 331.2 L304.2 331.4 L304.6 333.5 L305.1 332.4 L305.5 331.3 L306.0 332.8 L306.4 334.2 L306.9 332.8 L307.3 332.3 L307.8 331.5 L308.2 331.4 L308.7 333.9 L309.1 332.7 L309.6 334.0 L310.0 331.4 L310.5 331.9 L310.9 331.4 L311.4 332.4 L311.8 331.4 L312.3 332.0 L312.7 332.4 L313.2 332.1 L313.6 331.4 L314.1 331.3 L314.5 334.1 L315.0 331.7 L315.4 332.7 L315.9 332.4 L316.3 332.8 L316.8 331.5 L317.2 332.1 L317.7 331.5 L318.1 332.8 L318.6 334.0 L319.0 333.0 L319.5 333.8 L319.9 331.8 L320.4 331.3 L320.8 332.8 L321.3 332.7 L321.7 332.9 L322.2 332.3 L322.6 333.1 L323.1 333.4 L323.5 333.9 L324.0 332.1 L324.4 332.5 L324.9 333.7 L325.3 331.9 L325.8 331.5 L326.2 332.1 L326.7 331.5 L327.1 333.5 L327.6 333.7 L328.0 332.1 L328.5 331.6 L328.9 331.4 L329.4 331.9 L329.8 331.5 L330.3 332.5 L330.7 332.9 L331.2 331.9 L331.6 331.4 L332.1 333.3 L332.5 331.3 L333.0 331.8 L333.4 332.1 L333.9 332.3 L334.3 331.5 L334.8 332.5 L335.2 332.1 L335.7 333.5 L336.1 332.9 L336.6 333.9 L337.0 333.2 L337.5 333.5 L337.9 332.9 L338.4 332.5 L338.8 333.7 L339.3 333.2 L339.7 334.1 L340.2 333.4 L340.6 333.3 L341.1 332.0 L341.5 333.6 L342.0 332.3 L342.4 331.6 L342.9 331.4 L343.3 331.7 L343.8 332.0 L344.2 333.2 L344.7 332.1 L345.1 331.4 L345.6 333.5 L346.0 332.9 L346.5 331.3 L346.9 331.4 L347.4 331.6 L347.8 332.3 L348.3 333.8 L348.7 334.0 L349.2 333.0 L349.6 331.9 L350.1 332.5 L350.5 332.3 L351.0 332.2 L351.4 331.2 L351.9 333.0 L352.3 333.7 L352.8 333.4 L353.2 331.5 L353.7 332.8 L354.1 331.7 L354.6 333.3 L355.0 332.5 L355.5 334.0 L355.9 333.6 L356.4 331.6 L356.8 332.2 L357.3 333.9 L357.7 332.6 L358.2 332.5 L358.6 332.5 L359.1 333.5 L359.5 334.0 L360.0 332.8 L360.4 334.1 L360.9 333.0 L361.3 331.5 L361.8 333.6 L362.2 332.5 L362.7 331.4 L363.1 334.1 L363.6 331.3 L364.0 332.9 L364.5 332.6 L364.9 333.8 L365.4 332.4 L365.8 331.8 L366.3 332.0 L366.7 331.8 L367.2 332.9 L367.6 332.3 L368.1 333.5 L368.5 331.9 L369.0 332.3 L369.4 331.9 L369.9 334.1 L370.3 333.7 L370.8 333.7 L371.2 333.1 L371.7 332.4 L372.1 331.6 L372.6 333.7 L373.0 332.7 L373.5 331.3 L373.9 331.7 L374.4 331.5 L374.8 333.4 L375.3 333.9 L375.7 331.8 L376.2 333.6 L376.6 332.2 L377.1 333.2 L377.5 333.8 L378.0 333.1 L378.4 333.6 L378.9 332.3 L379.3 331.2 L379.8 332.7 L380.2 333.0 L380.7 331.8 L381.1 332.4 L381.6 332.2 L382.0 331.3 L382.5 332.1 L382.9 332.3 L383.4 332.6 L383.8 333.3 L384.3 332.4 L384.7 334.1 L385.2 333.6 L385.6 334.0 L386.1 333.3 L386.5 333.2 L387.0 332.8 L387.4 333.6 L387.9 332.3 L388.3 333.0 L388.8 333.2 L389.2 332.8 L389.7 332.1 L390.1 331.4 L390.6 331.5 L391.0 332.3 L391.5 332.9 L391.9 333.5 L392.4 333.3 L392.8 332.1 L393.3 334.0 L393.7 332.0 L394.2 333.3 L394.6 331.4 L395.1 333.5 L395.5 333.2 L396.0 334.1 L396.4 333.9 L396.9 333.3 L397.3 333.7 L397.8 333.4 L398.2 333.0 L398.7 331.8 L399.1 332.8 L399.6 333.9 L400.0 331.9 L400.5 334.1 L400.9 332.8 L401.4 332.4 L401.8 331.2 L402.3 332.4 L402.7 331.7 L403.2 333.2 L403.6 333.9 L404.1 333.9 L404.5 333.0 L405.0 332.4 L405.4 331.5 L405.9 333.3 L406.3 332.9 L406.8 333.3 L407.2 332.3 L407.7 333.9 L408.1 331.8 L408.6 332.1 L409.0 332.0 L409.5 333.1 L409.9 333.9 L410.4 331.7 L410.8 333.1 L411.3 333.5 L411.7 331.9 L412.2 331.4 L412.6 332.9 L413.1 333.7 L413.5 333.8 L414.0 333.4 L414.4 332.5 L414.9 332.5 L415.3 332.8 L415.8 333.9 L416.2 332.1 L416.7 332.0 L417.1 333.0 L417.6 334.1 L418.0 331.8 L418.5 331.3 L418.9 331.5 L419.4 332.9 L419.8 333.0 L420.3 331.8 L420.7 331.8 L421.2 333.0 L421.6 333.1 L422.1 333.3 L422.5 333.4 L423.0 331.4 L423.4 332.7 L423.9 333.7 L424.3 334.1 L424.8 332.2 L425.2 333.8 L425.7 333.1 L426.1 334.0 L426.6 331.9 L427.0 333.3 L427.5 333.7 L427.9 332.6 L428.4 331.5 L428.8 331.8 L429.3 331.7 L429.7 331.5 L430.2 331.7 L430.6 333.0 L431.1 331.5 L431.5 333.5 L432.0 333.4 L432.4 333.6 L432.9 333.6 L433.3 333.3 L433.8 334.0 L434.2 334.1 L434.7 333.1 L435.1 334.1 L435.6 331.5 L436.0 331.5 L436.5 331.4 L436.9 331.8 L437.4 332.3 L437.8 332.6 L438.3 333.2 L438.7 333.4 L439.2 331.5 L439.6 332.4 L440.1 332.8 L440.5 332.3 L441.0 331.6 L441.4 333.0 L441.9 332.3 L442.3 333.3 L442.8 332.7 L443.2 334.1 L443.7 334.0 L444.1 331.4 L444.6 333.5 L445.0 333.4 L445.5 332.1 L445.9 331.6 L446.4 332.6 L446.8 332.3 L447.3 333.4 L447.7 334.0 L448.2 332.3 L448.6 332.1 L449.1 332.7 L449.5 333.3 L450.0 333.6 L450.4 332.9 L450.9 332.1 L451.3 332.2 L451.8 333.7 L452.2 332.8 L452.7 331.4 L453.1 332.5 L453.6 331.9 L454.0 333.2 L454.5 331.4 L454.9 332.0 L455.4 331.5 L455.8 332.6 L456.3 334.2 L456.7 332.8 L457.2 332.4 L457.6 334.0 L458.1 331.5 L458.5 332.3 L459.0 333.6 L459.4 331.2 L459.9 333.5 L460.3 332.3 L460.8 331.2 L461.2 332.0 L461.7 332.6 L462.1 332.3 L462.6 332.8 L463.0 331.4 L463.5 331.9 L463.9 334.1 L464.4 332.5 L464.8 332.6 L465.3 331.5 L465.7 332.0 L466.2 334.1 L466.6 333.3 L467.1 332.7 L467.5 331.4 L468.0 332.4 L468.4 333.5 L468.9 332.5 L469.3 333.0 L469.8 333.9 L470.2 333.1 L470.7 333.1 L471.1 331.3 L471.6 331.3 L472.0 333.5 L472.5 332.4 L472.9 333.8 L473.4 333.7 L473.8 333.9 L474.3 332.3 L474.7 334.2 L475.2 333.5 L475.6 333.9 L476.1 331.6 L476.5 333.5 L477.0 332.5 L477.4 334.1 L477.9 334.2 L478.3 331.9 L478.8 332.5 L479.2 332.0 L479.7 332.6 L480.1 332.1 L480.6 333.2 L481.0 331.6 L481.5 331.7 L481.9 332.6 L482.4 331.4 L482.8 332.3 L483.3 333.9 L483.7 333.9 L484.2 331.8 L484.6 331.3 L485.1 333.7 L485.5 334.1 L486.0 333.0 L486.4 331.6 L486.9 331.9 L487.3 334.0 L487.8 334.0 L488.2 331.3 L488.7 331.8 L489.1 332.5 L489.6 332.0 L490.0 333.5 L490.5 332.3 L490.9 333.5 L491.4 331.7 L491.8 332.8 L492.3 334.1 L492.7 333.3 L493.2 331.5 L493.6 331.5 L494.1 333.1 L494.5 332.3 L495.0 332.3 L495.4 332.6 L495.9 332.9 L496.3 334.1 L496.8 331.9 L497.2 332.9 L497.7 332.0 L498.1 332.8 L498.6 333.4 L499.0 331.6 L499.5 332.6 L499.9 333.3 L500.4 331.2 L500.8 333.5 L501.3 332.5 L501.7 332.7 L502.2 333.0 L502.6 333.6 L503.1 331.4 L503.5 332.7 L504.0 331.3 L504.4 332.4 L504.9 332.2 L505.3 331.3 L505.8 332.1 L506.2 332.6 L506.7 333.2 L507.1 334.0 L507.6 332.3 L508.0 332.8 L508.5 333.3 L508.9 334.0 L509.4 334.0 L509.8 334.2 L510.3 332.1 L510.7 331.7 L511.2 334.0 L511.6 331.4 L512.1 332.5 L512.5 333.4 L513.0 332.8 L513.4 332.4 L513.9 334.0 L514.3 332.1 L514.8 332.9 L515.2 333.7 L515.7 331.6 L516.1 332.3 L516.6 332.7 L517.0 332.9 L517.5 331.8 L517.9 332.6 L518.4 331.4 L518.8 331.5 L519.3 332.2 L519.7 331.6 L520.2 334.1 L520.6 332.0 L521.1 332.0 L521.5 333.6 L522.0 333.4 L522.4 332.0 L522.9 333.7 L523.3 333.1 L523.8 332.4 L524.2 333.1 L524.7 331.9 L525.1 332.0 L525.6 333.8 L526.0 332.5 L526.5 333.9 L526.9 331.7 L527.4 331.6 L527.8 331.4 L528.3 333.4 L528.7 332.9 L529.2 331.2 L529.6 331.3 L530.1 333.7 L530.5 332.7 L531.0 333.8 L531.4 331.3 L531.9 333.0 L532.3 331.6 L532.8 333.4 L533.2 333.0 L533.7 333.0 L534.1 331.9 L534.6 334.0 L535.0 331.5 L535.5 331.4 L535.9 333.3 L536.4 331.5 L536.8 331.4 L537.3 332.6" stroke="#00b000" stroke-width="2.6" fill="none" stroke-linejoin="round"/>
<path d="M81.5 122.1 L82.0 121.1 L82.6 124.0 L83.0 147.2 L83.6 124.0 L84.0 124.2 L84.4 120.9 L84.8 124.2 L85.2 123.2 L85.7 121.4 L86.1 124.6 L86.5 122.7 L86.9 125.4 L87.4 124.1 L87.8 125.3 L88.3 128.5 L88.7 132.3 L89.2 128.7 L89.6 131.0 L90.0 133.0 L90.5 135.0 L90.9 132.4 L91.4 131.1 L91.8 134.8 L92.2 128.5 L92.7 133.7 L93.1 129.9 L93.6 128.8 L94.0 129.3 L94.5 132.9 L95.0 138.6 L95.4 133.9 L95.9 135.3 L96.3 134.2 L96.8 131.9 L97.2 131.0 L97.8 121.6 L98.4 131.0 L98.7 132.6 L99.0 131.6 L99.4 134.3 L99.8 139.1 L100.2 145.5 L99.8 154.4 L100.2 154.1 L100.7 156.4 L101.1 156.1 L101.5 156.1 L101.8 159.4 L102.2 158.0 L102.8 184.4 L103.4 150.0 L103.7 150.7 L104.0 147.6 L104.4 149.3 L104.8 149.1 L105.2 151.6 L105.7 150.7 L106.1 147.9 L106.5 151.5 L106.9 147.2 L107.4 149.5 L107.8 152.0 L108.3 148.3 L108.7 150.9 L109.2 148.2 L109.6 152.7 L110.1 153.6 L110.5 152.7 L111.0 155.0 L111.4 151.6 L111.9 154.4 L112.3 154.1 L112.8 154.1 L113.2 160.8 L113.6 162.9 L114.1 163.3 L114.5 159.9 L114.9 160.8 L115.4 156.5 L115.8 160.4 L116.2 159.7 L116.7 161.7 L117.1 159.5 L117.5 157.9 L118.0 159.7 L118.5 162.8 L118.9 159.7 L119.3 163.8 L119.8 163.1 L120.2 164.8 L120.7 161.4 L121.1 163.3 L121.6 160.0 L122.1 151.9 L122.8 160.0 L123.4 186.2 L124.2 159.0 L124.6 157.1 L125.0 156.7 L125.4 157.2 L125.8 160.0 L126.3 154.3 L126.7 156.3 L127.1 156.5 L127.5 159.7 L128.0 160.1 L128.4 161.3 L128.9 158.3 L129.3 160.1 L129.7 160.6 L130.2 164.9 L130.6 166.3 L131.1 161.8 L131.5 163.6 L132.1 164.2 L132.6 167.0 L133.1 193.8 L133.7 170.0 L134.0 168.8 L134.4 169.7 L134.9 170.2 L135.3 167.9 L135.8 166.0 L136.2 168.6 L136.7 168.1 L137.1 169.0 L137.6 172.2 L138.0 170.9 L138.5 170.2 L138.9 171.3 L139.4 172.2 L139.8 168.5 L140.3 174.6 L140.7 174.2 L141.2 175.3 L141.6 175.3 L142.1 173.3 L142.4 189.7 L142.8 206.9 L143.4 175.0 L143.8 173.7 L144.2 174.8 L144.7 170.9 L145.1 170.5 L145.5 171.0 L145.9 171.0 L146.3 172.9 L146.8 172.4 L147.2 173.5 L147.7 175.9 L148.1 177.0 L148.6 180.2 L149.0 180.4 L149.4 184.7 L149.9 182.7 L150.3 179.4 L150.8 179.8 L151.2 180.1 L151.7 180.0 L152.1 178.9 L152.5 185.6 L153.0 189.3 L153.4 188.6 L153.9 188.0 L154.3 184.8 L154.8 184.2 L155.2 185.6 L155.6 194.4 L156.0 187.0 L156.5 186.7 L156.9 188.3 L157.4 186.6 L157.8 185.9 L158.3 190.7 L158.8 188.7 L159.2 186.4 L159.7 189.3 L160.1 186.1 L160.6 189.7 L161.0 192.9 L161.5 191.6 L161.8 194.4 L162.1 195.2 L162.5 195.2 L163.0 193.8 L163.4 197.7 L163.9 196.0 L164.3 197.5 L164.7 194.4 L165.2 193.5 L165.6 197.3 L166.1 198.3 L166.5 196.6 L167.0 198.9 L167.4 200.9 L167.9 202.2 L168.4 201.3 L168.9 201.4 L169.3 199.0 L169.8 195.6 L170.2 195.4 L170.7 196.9 L171.2 197.7 L171.7 201.2 L172.1 202.3 L172.6 202.0 L173.0 211.2 L173.5 201.0 L174.1 200.2 L174.6 201.9 L175.1 205.7 L175.6 208.0 L176.0 206.6 L176.5 208.8 L177.0 205.9 L177.5 203.3 L178.0 201.7 L178.4 204.2 L178.9 206.4 L179.3 206.4 L179.8 204.5 L180.2 205.7 L180.8 207.6 L181.2 204.4 L181.6 214.8 L181.9 221.2 L182.5 201.2 L183.4 206.2 L183.8 230.0 L184.2 231.2 L184.6 230.6 L185.0 229.2 L185.4 229.9 L185.8 229.9 L186.2 236.0 L186.7 234.9 L187.1 240.0 L187.5 242.1 L187.9 236.2 L188.3 233.1 L188.8 232.6 L189.2 233.2 L189.6 230.7 L190.0 231.5 L190.4 232.8 L190.8 238.0 L191.2 257.5 L191.8 235.0 L192.2 236.7 L192.5 232.8 L192.9 237.0 L193.4 238.4 L193.8 236.6 L194.3 235.0 L194.7 236.7 L195.2 234.4 L195.6 234.0 L196.1 240.7 L196.5 239.0 L197.0 238.6 L197.4 241.7 L197.9 238.8 L198.3 242.1 L198.8 241.4 L199.2 240.3 L199.7 242.7 L200.1 245.2 L200.6 247.6 L201.0 249.4 L201.4 249.0 L201.9 281.9 L202.5 248.0 L202.8 246.4 L203.2 246.4 L203.6 244.0 L204.1 248.6 L204.5 244.3 L204.9 244.5 L205.4 244.8 L205.8 246.3 L206.2 242.8 L206.6 251.8 L206.9 255.0 L207.5 226.9 L207.9 227.8 L208.3 228.9 L208.8 229.9 L209.2 227.5 L209.6 231.2 L210.0 231.1 L210.5 230.0 L211.0 234.0 L211.6 249.4 L212.2 234.0 L212.5 233.8 L212.8 210.6 L213.2 211.5 L213.7 210.1 L214.1 211.1 L214.6 212.8 L215.1 212.0 L215.5 210.7 L216.0 212.2 L216.4 212.7 L216.9 213.8 L217.3 209.8 L217.8 212.7 L218.2 210.6 L218.7 210.7 L219.1 213.9 L219.6 212.0 L220.0 212.2 L220.4 218.1 L220.9 212.0 L221.3 212.2 L221.7 213.4 L222.1 209.7 L222.5 209.9 L222.9 209.8 L223.4 210.1 L223.8 211.7 L224.3 210.4 L224.7 211.3 L225.1 211.2 L225.6 214.6 L226.0 213.4 L226.5 214.8 L226.9 215.6 L227.4 211.4 L227.8 213.7 L228.2 216.6 L228.7 216.3 L229.1 211.9 L229.6 212.2 L230.0 214.7 L230.3 212.7 L230.6 216.0 L231.0 236.9 L231.5 210.0 L231.9 208.3 L232.3 207.7 L232.8 212.7 L233.2 214.5 L233.7 216.3 L234.1 212.5 L234.6 217.3 L235.0 217.6 L235.4 213.4 L235.8 217.1 L236.2 216.5 L236.7 210.4 L237.1 214.1 L237.5 209.6 L237.9 210.6 L238.4 214.7 L238.8 214.3 L239.3 210.6 L239.7 213.1 L240.2 214.4 L240.6 214.3 L240.9 224.9 L241.2 238.8 L241.9 223.0 L242.2 221.6 L242.5 223.5 L242.8 247.5 L243.2 250.0 L243.6 256.0 L244.0 259.3 L244.4 261.6 L244.8 259.3 L245.2 257.9 L245.6 253.8 L246.0 251.3 L246.5 257.8 L246.9 257.0 L247.4 258.6 L247.8 253.3 L248.2 254.8 L248.7 253.8 L249.1 259.1 L249.6 256.1 L250.0 256.5 L250.5 258.5 L251.0 260.0 L251.5 282.5 L252.0 261.0 L252.5 263.1 L253.0 262.5 L253.5 258.0 L253.9 256.4 L254.4 260.7 L254.9 257.5 L255.4 257.1 L255.8 258.5 L256.2 264.3 L256.7 269.0 L257.1 268.7 L257.5 267.8 L257.9 275.0 L258.3 274.4 L258.8 276.3 L259.2 270.7 L259.7 274.2 L260.1 267.5 L260.6 270.3 L260.9 270.1 L261.2 272.0 L261.7 301.2 L262.3 274.0 L262.7 272.8 L263.1 274.0 L263.6 275.5 L264.0 270.1 L264.4 268.2 L264.9 269.8 L265.4 266.8 L265.8 265.0 L266.2 265.0 L266.6 266.8 L266.9 271.7 L267.3 265.9 L267.7 259.9 L268.1 256.4 L268.6 254.3 L269.1 256.0 L269.5 254.6 L270.0 256.3 L270.5 257.0 L271.0 284.7 L271.6 256.0 L271.9 252.6 L272.2 254.5 L272.8 250.1 L273.2 252.6 L273.8 249.0 L274.2 245.7 L274.6 246.5 L275.0 248.5 L275.5 242.0 L275.9 244.9 L276.3 245.4 L276.7 248.2 L277.1 252.8 L277.5 252.5 L277.9 252.1 L278.3 252.4 L278.8 253.4 L279.2 248.3 L279.6 250.6 L280.0 248.4 L280.6 249.6 L281.1 250.0 L281.6 270.0 L282.2 255.0 L282.8 254.6 L283.2 253.1 L283.6 250.3 L284.1 249.9 L284.6 248.6 L285.0 251.7 L285.4 252.5 L285.8 255.5 L286.2 259.4 L286.7 264.6 L287.1 266.0 L287.5 265.8 L287.9 264.4 L288.3 265.3 L288.8 267.2 L288.9 276.1 L289.3 272.1 L289.8 272.1 L290.2 269.1 L290.6 270.8 L290.9 272.5 L291.2 270.0 L291.7 293.0 L292.3 270.0 L292.7 269.8 L293.1 267.9 L293.6 271.8 L294.1 267.3 L294.5 267.4 L295.0 265.9 L295.5 269.5 L296.0 272.3 L296.4 274.7 L296.9 274.9 L297.4 279.1 L297.9 279.1 L298.4 270.0 L298.9 243.8 L299.3 243.0 L299.7 241.3 L300.2 242.7 L300.6 240.2 L301.0 241.0 L301.3 245.3 L301.6 250.0 L302.2 317.0 L302.9 270.0 L303.5 268.8 L304.2 231.0 L304.7 231.1 L305.1 232.8 L305.6 233.3 L306.1 235.5 L306.6 235.6 L307.0 236.7 L307.5 237.7 L308.0 235.8 L308.4 235.9 L308.9 240.7 L309.4 235.7 L309.8 240.0 L310.3 239.9 L310.8 236.5 L311.2 241.5 L311.6 259.5 L311.9 273.8 L312.5 248.8 L313.0 249.4 L313.4 250.1 L313.9 251.1 L314.3 248.6 L314.8 250.9 L315.2 251.2 L315.7 253.7 L316.1 253.9 L316.6 254.5 L317.0 253.3 L317.5 254.8 L317.9 255.1 L318.3 256.0 L318.8 253.8 L319.2 253.3 L319.6 254.8 L320.0 257.4 L320.5 255.9 L321.0 259.0 L321.6 292.5 L322.3 254.0 L322.7 255.5 L323.1 252.8 L323.6 253.0 L324.0 252.7 L324.5 252.8 L324.9 251.2 L325.4 247.7 L325.8 252.6 L326.2 252.0 L326.7 250.0 L327.1 249.9 L327.6 250.4 L328.1 246.2 L328.5 249.8 L328.9 248.1 L329.3 247.9 L329.8 250.2 L330.2 254.3 L330.6 252.5 L330.9 273.8 L331.2 290.6 L332.2 266.2 L333.1 243.8 L334.4 253.8 L334.8 255.7 L335.3 255.5 L335.7 255.8 L336.2 257.2 L336.6 259.4 L337.1 260.9 L337.5 260.5 L337.8 256.6 L338.1 251.2 L338.8 259.0 L339.2 257.9 L339.7 257.2 L340.2 258.1 L340.6 261.1 L340.9 269.0 L341.2 280.6 L341.9 254.0 L342.2 253.7 L342.5 250.4 L342.9 250.9 L343.3 253.5 L343.8 257.4 L344.2 258.8 L344.6 259.9 L345.0 259.1 L345.5 258.7 L345.9 257.0 L346.4 255.6 L346.9 252.7 L347.3 257.9 L347.7 254.3 L348.1 260.4 L348.6 261.0 L349.0 255.9 L349.4 259.8 L349.9 262.6 L350.5 261.0 L351.0 286.2 L351.6 261.0 L352.1 263.9 L352.5 260.4 L353.0 259.2 L353.4 258.9 L353.9 263.9 L354.3 259.2 L354.8 261.7 L355.2 258.9 L355.7 261.6 L356.1 264.5 L356.6 259.2 L357.0 263.9 L357.5 261.9 L357.9 264.5 L358.3 263.3 L358.8 260.2 L359.2 263.7 L359.6 262.0 L360.0 262.0 L360.6 288.8 L361.2 262.0 L361.5 259.1 L361.9 260.3 L362.4 262.4 L362.8 262.2 L363.3 261.2 L363.8 260.1 L364.2 261.5 L364.7 261.3 L365.2 264.7 L365.6 259.2 L366.1 264.2 L366.6 264.7 L367.0 260.0 L367.5 264.4 L368.0 265.8 L368.4 268.9 L368.9 266.7 L369.4 269.4 L369.8 278.7 L370.2 288.8 L371.2 257.5 L371.7 257.6 L372.1 255.8 L372.5 253.5 L372.9 252.9 L373.3 250.8 L373.8 249.3 L374.2 248.6 L374.6 253.5 L375.1 249.8 L375.5 254.1 L376.0 249.6 L376.4 249.7 L376.8 251.3 L377.3 249.2 L377.7 250.4 L378.2 254.3 L378.6 253.8 L379.0 253.3 L379.5 252.1 L379.9 254.0 L380.4 254.2 L380.8 251.6 L381.2 252.2 L381.7 248.4 L382.2 253.0 L382.6 251.3 L383.1 253.4 L383.5 252.8 L384.0 250.5 L384.4 249.1 L384.9 255.0 L385.3 249.8 L385.8 252.2 L386.2 251.8 L386.7 253.2 L387.2 258.1 L387.6 261.7 L388.1 259.5 L388.6 261.0 L389.1 258.0 L389.6 258.8 L390.1 258.0 L390.6 275.0 L391.2 252.0 L391.5 250.8 L391.9 249.9 L392.4 250.8 L392.9 251.9 L393.3 257.4 L393.8 255.6 L394.2 254.5 L394.7 259.7 L395.2 261.0 L395.6 258.1 L396.1 256.8 L396.6 257.8 L397.0 257.8 L397.5 260.6 L397.9 257.5 L398.3 257.4 L398.8 256.5 L399.2 257.5 L399.6 258.6 L400.0 256.1 L400.4 255.7 L400.8 256.9 L401.2 258.9 L401.7 259.2 L402.1 260.2 L402.5 260.6 L403.0 259.9 L403.4 263.4 L403.9 256.7 L404.4 258.1 L404.8 257.9 L405.3 258.3 L405.8 253.0 L406.2 252.7 L406.7 254.9 L407.2 258.7 L407.6 261.8 L408.1 267.0 L408.5 266.6 L408.9 266.0 L409.3 261.2 L409.7 262.0 L410.2 281.2 L410.8 256.0 L411.2 255.9 L411.6 258.8 L412.1 261.3 L412.5 259.9 L412.9 261.6 L413.3 258.8 L413.8 262.6 L414.2 262.4 L414.6 258.2 L415.0 254.1 L415.4 256.3 L415.9 252.3 L416.3 252.1 L416.8 253.1 L417.2 256.2 L417.7 258.0 L418.1 259.4 L418.6 259.5 L419.0 259.1 L419.5 259.0 L420.0 290.0 L420.6 260.0 L420.9 262.4 L421.2 261.1 L421.7 260.9 L422.2 256.8 L422.7 261.0 L423.1 256.7 L423.6 260.5 L424.1 258.0 L424.5 255.0 L425.0 254.0 L425.4 255.1 L425.9 258.8 L426.3 260.4 L426.8 257.7 L427.2 258.6 L427.7 262.7 L428.1 264.1 L428.6 262.1 L429.2 262.0 L429.8 278.1 L430.3 257.0 L430.6 255.0 L431.0 257.0 L431.5 253.3 L431.9 255.3 L432.4 256.5 L432.8 259.9 L433.2 258.0 L433.7 259.7 L434.1 257.1 L434.6 255.6 L435.0 256.4 L435.4 261.8 L435.8 261.4 L436.2 260.0 L436.7 259.3 L437.1 263.7 L437.5 265.8 L437.9 263.1 L438.4 260.7 L438.8 262.1 L439.3 262.4 L439.7 256.5 L440.2 253.9 L440.6 254.9 L441.0 255.2 L441.5 257.1 L441.9 254.0 L442.4 258.1 L442.8 257.8 L443.2 256.4 L443.7 254.6 L444.1 259.7 L444.6 255.5 L445.0 258.3 L445.5 257.0 L445.9 258.8 L446.4 264.2 L446.9 263.5 L447.3 263.8 L447.7 257.3 L448.1 252.4 L448.5 256.0 L449.0 284.4 L449.6 256.0 L450.1 253.7 L450.6 254.6 L451.0 255.3 L451.5 256.5 L451.9 250.4 L452.4 251.3 L452.8 249.4 L453.2 253.6 L453.7 247.4 L454.1 246.0 L454.6 245.3 L455.0 247.0 L455.5 250.6 L455.9 251.0 L456.4 250.4 L456.9 252.7 L457.3 252.7 L457.8 249.2 L458.3 248.7 L458.8 253.2 L459.1 247.6 L459.4 238.5 L459.8 241.6 L460.3 239.7 L460.7 239.6 L461.1 239.2 L461.6 238.1 L462.0 237.0 L462.4 238.7 L462.9 239.1 L463.3 243.1 L463.8 238.3 L464.2 244.2 L464.7 240.3 L465.2 242.3 L465.6 246.5 L466.1 247.6 L466.6 246.1 L467.0 244.7 L467.5 248.6 L468.0 248.3 L468.4 251.4 L468.9 250.0 L469.4 271.9 L470.0 242.0 L470.3 239.0 L470.6 239.4 L471.0 244.1 L471.4 239.8 L471.9 243.8 L472.3 247.9 L472.7 249.1 L473.1 246.7 L473.5 243.4 L474.0 241.3 L474.4 243.7 L474.8 241.1 L475.3 245.1 L475.7 246.9 L476.2 244.0 L476.6 244.4 L477.1 249.7 L477.5 248.0 L478.0 246.2 L478.5 248.0 L479.0 261.9 L479.6 243.0 L480.1 243.6 L480.6 240.4 L481.1 241.2 L481.5 240.8 L481.9 247.2 L482.4 249.7 L482.9 249.3 L483.3 252.7 L483.8 249.2 L484.2 246.7 L484.7 245.5 L485.1 245.8 L485.6 242.0 L486.0 240.3 L486.4 240.4 L486.9 242.7 L487.3 244.1 L487.7 248.0 L488.1 244.9 L488.5 247.0 L489.0 268.8 L489.6 241.0 L490.1 242.2 L490.6 240.4 L491.1 243.0 L491.5 244.2 L491.9 244.7 L492.4 244.3 L492.9 245.8 L493.3 247.6 L493.8 251.2 L494.2 245.2 L494.6 244.7 L495.0 244.0 L495.6 233.8 L496.2 244.0 L496.6 246.7 L497.1 245.5 L497.5 246.8 L497.9 244.4 L498.4 246.6 L498.8 243.9 L499.3 246.9 L499.7 245.0 L500.2 244.5 L500.6 239.0 L501.1 239.9 L501.6 242.6 L502.0 247.9 L502.5 251.5 L502.9 248.8 L503.4 246.0 L503.8 245.8 L504.3 245.7 L504.7 244.6 L505.2 243.7 L505.6 242.1 L506.1 243.0 L506.6 240.8 L507.1 245.8 L507.6 246.0 L508.1 263.8 L508.7 242.0 L509.1 240.2 L509.6 240.7 L510.0 238.8 L510.5 242.3 L510.9 240.1 L511.4 241.7 L511.9 243.0 L512.3 243.7 L512.8 249.9 L513.3 249.2 L513.8 249.2 L514.2 248.0 L514.6 250.6 L515.0 246.0 L515.4 242.8 L515.8 245.3 L516.2 242.6 L516.7 246.5 L517.1 242.9 L517.6 246.0 L518.1 280.6 L518.8 245.0 L519.2 244.3 L519.7 245.9 L520.1 245.4 L520.6 244.3 L521.1 240.4 L521.5 242.9 L522.0 242.7 L522.4 244.0 L522.9 250.1 L523.3 248.4 L523.8 250.6 L524.2 246.8 L524.7 249.0 L525.1 245.2 L525.6 243.3 L526.0 247.1 L526.5 249.1 L527.0 245.8 L527.4 248.0 L527.9 263.1 L528.5 248.0 L529.0 248.4 L529.4 248.0 L529.8 245.2 L530.2 245.8 L530.6 243.9 L531.1 243.9 L531.5 243.8 L531.9 245.4 L532.4 247.7 L532.8 246.5 L533.3 247.0 L533.8 251.1 L534.2 246.2 L534.8 238.1 L536.0 240.0 L537.2 243.8" stroke="#c400c0" stroke-width="2.1" fill="none" stroke-linejoin="round" stroke-linecap="round"/>
<rect x="12.5" y="374" width="540" height="38" fill="#fff" stroke="#b4b4b4" stroke-width="1"/>
<path d="M14.4 383.8H29.7" stroke="#00c000" stroke-width="2"/>
<path d="M198 383.8H213.4" stroke="#2222cc" stroke-width="2"/>
<path d="M14.4 403H29.7" stroke="#cc00cc" stroke-width="2"/>
<path d="M269.7 403H284.7" stroke="#00c8c8" stroke-width="2"/>
<g font-size="11">
<text x="33" y="387.8" textLength="159.4" lengthAdjust="spacing">WindowsWMI_CPU Utilization</text>
<text x="216.8" y="387.8" textLength="160.8" lengthAdjust="spacing">WindowsWMI_Disk Utilization</text>
<text x="33" y="406.4" textLength="230.6" lengthAdjust="spacing">WindowsWMI_Free Physical Memory (MB)</text>
<text x="287.8" y="406.4" textLength="156.2" lengthAdjust="spacing">WindowsWMI_I/O Wait Time</text>
</g>
</svg>
<div class="hl" style="left:2px;top:442px;width:683.3px;height:2px;background:linear-gradient(#ececec,#e2e2e2)"></div>
<div class="hl" style="left:2px;top:469px;width:683.3px;"></div>
<div class="hl" style="left:2px;top:496px;width:683.3px;"></div>
<!-- scrollbar -->
<div class="abs" style="left:685.3px;top:443.5px;width:16px;height:77.5px;background:#f1f1f1;"></div>
<div class="abs" style="left:687px;top:460px;width:13px;height:33px;background:#c1c1c1;"></div>
<svg class="abs" style="left:685px;top:444px" width="17" height="77" viewBox="0 0 17 77"><path d="M5 10.6l3.4-3.4 3.4 3.4z" fill="#bdbdbd"/><path d="M4.8 66l3.6 3.7 3.6-3.7z" fill="#444"/></svg>
<span class="t" style="left:24.25px;top:61px;font-size:12.6px;letter-spacing:0.042px;font-weight:bold;color:#000;">Performance Metric Widget</span>
<span class="t" style="left:7.75px;top:422px;font-size:13.7px;letter-spacing:0.042px;font-weight:bold;color:#1c1c1c;">Monitor</span>
<span class="t" style="left:282.90px;top:422px;font-size:13.7px;letter-spacing:0.038px;font-weight:bold;color:#1c1c1c;">Attribute</span>
<span class="t" style="left:575.05px;top:422px;font-size:13.7px;letter-spacing:-0.045px;font-weight:bold;color:#1c1c1c;">Value(units)</span>
<span class="t" style="left:8.75px;top:449px;font-size:14.5px;letter-spacing:0.167px;color:#2f2f2f;">WindowsWMI</span>
<span class="t" style="left:8.75px;top:475px;font-size:14.5px;letter-spacing:0.167px;color:#2f2f2f;">WindowsWMI</span>
<span class="t" style="left:8.75px;top:502px;font-size:14.5px;letter-spacing:0.167px;color:#2f2f2f;">WindowsWMI</span>
<span class="t" style="left:277.65px;top:449px;font-size:14.5px;letter-spacing:-0.082px;color:#2f2f2f;">CPU Utilization</span>
<span class="t" style="left:277.15px;top:475px;font-size:14.5px;letter-spacing:-0.030px;color:#2f2f2f;">Disk Utilization</span>
<span class="t" style="left:277.15px;top:502px;font-size:14.5px;letter-spacing:-0.117px;color:#2f2f2f;">Free Physical Memory (MB)</span>
<span class="t" style="left:563.55px;top:449px;font-size:14.5px;letter-spacing:0.425px;color:#2f2f2f;">46(%)</span>
<span class="t" style="left:563.05px;top:475px;font-size:14.5px;letter-spacing:0.550px;color:#2f2f2f;">64(%)</span>
<span class="t" style="left:563.25px;top:502px;font-size:14.5px;letter-spacing:0.113px;color:#2f2f2f;">2,561</span>

<!-- WIDGET 2 : Monitor Groups -->
<div class="w" id="w2" style="left:1px;top:541px;width:711px;height:200px;">
  <div class="wh"><svg class="grip"><use href="#grip"/></svg><svg class="hic" style="left:665px"><use href="#hicons"/></svg></div>
</div>
<div class="hl" style="left:2px;top:598px;width:709px;"></div>
<div class="hl" style="left:2px;top:625px;width:709px;"></div>
<div class="hl" style="left:2px;top:652px;width:709px;"></div>
<div class="hl" style="left:2px;top:678px;width:709px;"></div>
<div class="hl" style="left:2px;top:705px;width:709px;"></div>
<div class="dot dr" style="left:304.2px;top:604.5px"></div>
<div class="dot dr" style="left:429.1px;top:604.5px"></div>
<div class="dot dg" style="left:304.2px;top:631.2px"></div>
<div class="dot dg" style="left:429.1px;top:631.2px"></div>
<div class="dot dr" style="left:304.2px;top:658.2px"></div>
<div class="dot dr" style="left:429.1px;top:658.2px"></div>
<div class="dot dg" style="left:304.2px;top:685.4px"></div>
<div class="dot dr" style="left:429.1px;top:685.4px"></div>
<div class="dot dr" style="left:304.2px;top:712.4px"></div>
<div class="dot dr" style="left:429.1px;top:712.4px"></div>
<span class="t" style="left:24.25px;top:550px;font-size:12.6px;letter-spacing:0.038px;font-weight:bold;color:#000;">Monitor Groups</span>
<span class="t" style="left:9.00px;top:578px;font-size:13.7px;font-weight:bold;color:#1c1c1c;">Name</span>
<span class="t" style="left:276.40px;top:578px;font-size:13.7px;letter-spacing:-0.018px;font-weight:bold;color:#1c1c1c;">Availability</span>
<span class="t" style="left:415.60px;top:578px;font-size:13.7px;letter-spacing:0.160px;font-weight:bold;color:#1c1c1c;">Health</span>
<span class="t" style="left:493.00px;top:578px;font-size:13.7px;letter-spacing:0.018px;font-weight:bold;color:#1c1c1c;">Monitors Status</span>
<span class="t" style="left:8.75px;top:604px;font-size:14.5px;letter-spacing:0.079px;color:#2f2f2f;">Applications Manager</span>
<span class="t" style="left:7.50px;top:631px;font-size:14.5px;letter-spacing:0.182px;color:#2f2f2f;">BusinessView</span>
<span class="t" style="left:7.75px;top:659px;font-size:14.5px;letter-spacing:0.333px;color:#2f2f2f;">Horizon</span>
<span class="t" style="left:7.75px;top:685px;font-size:14.5px;letter-spacing:0.167px;color:#2f2f2f;">MapView</span>
<span class="t" style="left:7.75px;top:712px;font-size:14.5px;letter-spacing:0.188px;color:#2f2f2f;">Monitor Group</span>
<span class="t" style="left:492.30px;top:604px;font-size:14.5px;letter-spacing:-0.127px;color:#2f2f2f;">3/6 in error</span>
<span class="t" style="left:492.30px;top:631px;font-size:14.5px;letter-spacing:-0.127px;color:#2f2f2f;">0/4 in error</span>
<span class="t" style="left:492.05px;top:659px;font-size:14.5px;letter-spacing:-0.105px;color:#2f2f2f;">2/5 in error</span>
<span class="t" style="left:492.05px;top:685px;font-size:14.5px;letter-spacing:-0.105px;color:#2f2f2f;">2/4 in error</span>
<span class="t" style="left:491.80px;top:712px;font-size:14.5px;letter-spacing:-0.082px;color:#2f2f2f;">1/6 in error</span>

<!-- WIDGET 3 : Threshold Breakers -->
<div class="w" id="w3" style="left:724px;top:52px;width:570px;height:89px;">
  <div class="wh"><svg class="grip" style="left:6px"><use href="#grip"/></svg><svg class="hic" style="left:515.3px"><use href="#hicons"/></svg></div>
</div>
<div class="hl" style="left:725px;top:108px;width:555px;"></div>
<div class="hl" style="left:725px;top:136px;width:555px;"></div>
<svg class="abs" style="left:735px;top:116.7px;overflow:visible" width="13" height="13" viewBox="0 0 13 13">
  <rect x="1.3" y="1.2" width="10.4" height="10.6" fill="#fff4f5" stroke="#ff0a1e" stroke-width="1.4"/>
  <path d="M4.7 9.3C3.9 7.3 5.1 5.7 7.4 4.9" fill="none" stroke="#ff0a1e" stroke-width="2" stroke-linecap="round"/>
  <path d="M5.9 2.9h4.1v4.1z" fill="#ff0a1e"/>
</svg>
<div class="abs" style="left:1011.8px;top:117.2px;width:61px;height:10px;box-sizing:border-box;border:1px solid #ff6e78;background:#fff;"></div>
<div class="abs" style="left:1011.8px;top:117.2px;width:3px;height:10px;background:#f5202e;"></div>
<span class="t" style="left:749.45px;top:61px;font-size:12.6px;letter-spacing:-0.041px;font-weight:bold;color:#000;">Threshold Breakers</span>
<span class="t" style="left:780.25px;top:89px;font-size:13.7px;font-weight:bold;color:#1c1c1c;">Monitor Name</span>
<span class="t" style="left:973.70px;top:89px;font-size:13.7px;letter-spacing:0.018px;font-weight:bold;color:#1c1c1c;">Packets Sent</span>
<span class="t" style="left:1094.25px;top:89px;font-size:13.7px;letter-spacing:-0.077px;font-weight:bold;color:#1c1c1c;">Threshold Name</span>
<span class="t" style="left:778.95px;top:115px;font-size:14.5px;letter-spacing:0.245px;color:#2f2f2f;">Ping Non EUM</span>
<span class="t" style="left:973.30px;top:115px;font-size:14.5px;letter-spacing:-0.300px;color:#2f2f2f;">3.0</span>
<span class="t" style="left:1091.55px;top:115px;font-size:14.5px;letter-spacing:-0.125px;color:#2f2f2f;">Packet Sent</span>

<!-- WIDGET 4 : Tabular Data -->
<div class="w" id="w4" style="left:724px;top:156.5px;width:570px;height:88.5px;">
  <div class="wh"><svg class="grip" style="left:6px"><use href="#grip"/></svg><svg class="hic" style="left:515.3px"><use href="#hicons"/></svg></div>
</div>
<div class="hl" style="left:725px;top:212px;width:555px;"></div>
<div class="hl" style="left:725px;top:239px;width:555px;"></div>
<span class="t" style="left:749.75px;top:165px;font-size:12.6px;letter-spacing:-0.132px;font-weight:bold;color:#000;">Tabular Data</span>
<span class="t" style="left:732.60px;top:193px;font-size:13.7px;letter-spacing:0.014px;font-weight:bold;color:#1c1c1c;">Monitor Name</span>
<span class="t" style="left:1009.50px;top:193px;font-size:13.7px;letter-spacing:0.014px;font-weight:bold;color:#1c1c1c;">Critical Faults</span>
<span class="t" style="left:731.95px;top:219px;font-size:14.5px;letter-spacing:0.200px;color:#2f2f2f;">Cisco UCS</span>
<span class="t" style="left:1011.00px;top:219px;font-size:14.5px;color:#2f2f2f;">0</span>

<!-- WIDGET 5 : Availability, Health and Alarm Summary -->
<div class="w" id="w5" style="left:724px;top:260px;width:570px;height:162.5px;">
  <div class="wh" style="background:#f6f6f6"><svg class="grip" style="left:6px"><use href="#grip"/></svg><svg class="hic" style="left:515.3px"><use href="#hicons"/></svg></div>
</div>
<div class="abs" style="left:725.5px;top:290px;width:550.5px;height:15px;background:linear-gradient(#e2e2e2,#f1f1f1 40%,#fff);"></div>
<div class="abs" style="left:725.5px;top:410.5px;width:550.5px;height:7.5px;background:linear-gradient(#fff,#efefef 55%,#dcdcdc);"></div>
<!-- availability icon -->
<svg class="abs" style="left:764px;top:331.4px;overflow:visible" width="44" height="44" viewBox="0 0 44 44">
  <defs>
    <linearGradient id="gg" x1="0" y1="0" x2="0" y2="1"><stop offset="0" stop-color="#62f20a"/><stop offset=".5" stop-color="#4fe600"/><stop offset=".53" stop-color="#3fd400"/><stop offset="1" stop-color="#35c600"/></linearGradient>
    <linearGradient id="gr" x1="0" y1="0" x2="0" y2="1"><stop offset="0" stop-color="#d6d6d6"/><stop offset="1" stop-color="#e2e2e2"/></linearGradient>
  </defs>
  <circle cx="22" cy="22.2" r="20.5" fill="#fff" stroke="url(#gr)" stroke-width="1.7"/>
  <circle cx="22" cy="22.2" r="18.4" fill="url(#gg)"/>
  <path d="M22.4 11.8l8.2 9.4h-3.9v11.3h-8.4V21.2h-4.1z" fill="#fff"/>
</svg>
<!-- health icon -->
<svg class="abs" style="left:874.6px;top:331.4px;overflow:visible" width="44" height="44" viewBox="0 0 44 44">
  <circle cx="22" cy="22.2" r="20.5" fill="#fff" stroke="url(#gr)" stroke-width="1.7"/>
  <circle cx="22" cy="22.2" r="18.4" fill="url(#gg)"/>
  <path d="M13.9 21.6l7.2 7.4 10-15.4" fill="none" stroke="#fff" stroke-width="4.8" stroke-linejoin="miter"/>
</svg>
<div class="abs" style="left:1066px;top:321.3px;width:205.5px;height:21.8px;background:linear-gradient(#6cf000 0%,#6ce000 30%,#74c400 48%,#7ab800 60%,#7eb400 100%);"></div>
<span class="t" style="left:748.55px;top:269px;font-size:12.6px;font-weight:bold;color:#000;">Availability,Health and Alarm Summary</span>
<span class="t" style="left:743.90px;top:309px;font-size:15.7px;letter-spacing:0.109px;font-weight:bold;color:#1c1c1c;">Availability</span>
<span class="t" style="left:871.30px;top:309px;font-size:15.7px;letter-spacing:0.380px;font-weight:bold;color:#1c1c1c;">Health</span>
<span class="t" style="left:761.50px;top:384px;font-size:15.7px;letter-spacing:0.050px;font-weight:bold;color:#1c1c1c;">Up 1/1</span>
<span class="t" style="left:876.25px;top:384px;font-size:15.7px;letter-spacing:0.188px;font-weight:bold;color:#1c1c1c;">Clear</span>
<span class="t" style="left:977.00px;top:325px;font-size:15.7px;letter-spacing:0.350px;font-weight:bold;color:#1c1c1c;">Alarms</span>
<span class="t" style="left:1133.75px;top:296px;font-size:15.7px;letter-spacing:0.250px;font-weight:bold;color:#1c1c1c;">Clear</span>
<span class="t" style="left:1101.75px;top:353px;font-size:15.7px;letter-spacing:0.015px;font-weight:bold;color:#1c1c1c;">Total Monitors = 1</span>
<span class="t" style="left:1164.00px;top:325px;font-size:16px;font-weight:bold;color:#3a3a34;">1</span>

<!-- WIDGET 6 : Monitor Status Overview -->
<div class="w" id="w6" style="left:724px;top:438px;width:570px;height:279px;">
  <div class="wh"><svg class="grip" style="left:6px"><use href="#grip"/></svg><svg class="hic" style="left:515.3px"><use href="#hicons"/></svg></div>
</div>
<svg class="abs" style="left:0;top:0;overflow:visible" width="1280" height="720" viewBox="0 0 1280 720"><g stroke="#fff" stroke-width="2.2" stroke-linejoin="round">
<path d="M862.50 589.60L936.91 656.25A99.9 99.9 0 0 1 862.50 689.50Z" fill="#ff4d55"/>
<path d="M862.50 589.60L862.50 689.50A99.9 99.9 0 0 1 856.50 689.32Z" fill="#757575"/>
<path d="M862.50 589.60L856.50 689.32A99.9 99.9 0 0 1 850.53 688.78Z" fill="#a6a5f7"/>
<path d="M862.50 589.60L850.53 688.78A99.9 99.9 0 1 1 936.91 656.25Z" fill="#03bb76"/>
</g></svg>
<svg class="abs" style="left:1010.8px;top:561.6px;fill:#ff4d55" width="12" height="12"><use href="#pieic"/></svg>
<svg class="abs" style="left:1010.8px;top:583.3px;fill:#10bb72" width="12" height="12"><use href="#pieic"/></svg>
<svg class="abs" style="left:1010.8px;top:604.6px;fill:#a3a2f6" width="12" height="12"><use href="#pieic"/></svg>
<svg class="abs" style="left:1010.8px;top:626.1px;fill:#787878" width="12" height="12"><use href="#pieic"/></svg>
<span class="t" style="left:748.25px;top:447px;font-size:12.6px;letter-spacing:0.027px;font-weight:bold;color:#000;">Monitor Status Overview</span>
<span class="t" style="left:1010.30px;top:541px;font-size:13.6px;letter-spacing:0.022px;font-weight:bold;color:#505050;">Monitors count: 314</span>
<span class="t" style="left:1027.50px;top:562px;font-size:11.7px;letter-spacing:0.017px;color:#5c5c5c;">Critical - 42</span>
<span class="t" style="left:1027.50px;top:583px;font-size:11.7px;letter-spacing:0.025px;color:#5c5c5c;">Clear - 266</span>
<span class="t" style="left:1027.00px;top:604px;font-size:11.7px;letter-spacing:0.083px;color:#5c5c5c;">Unmanaged - 3</span>
<span class="t" style="left:1027.00px;top:626px;font-size:11.7px;letter-spacing:0.055px;color:#5c5c5c;">Unknown - 3</span>

</body>
</html>
